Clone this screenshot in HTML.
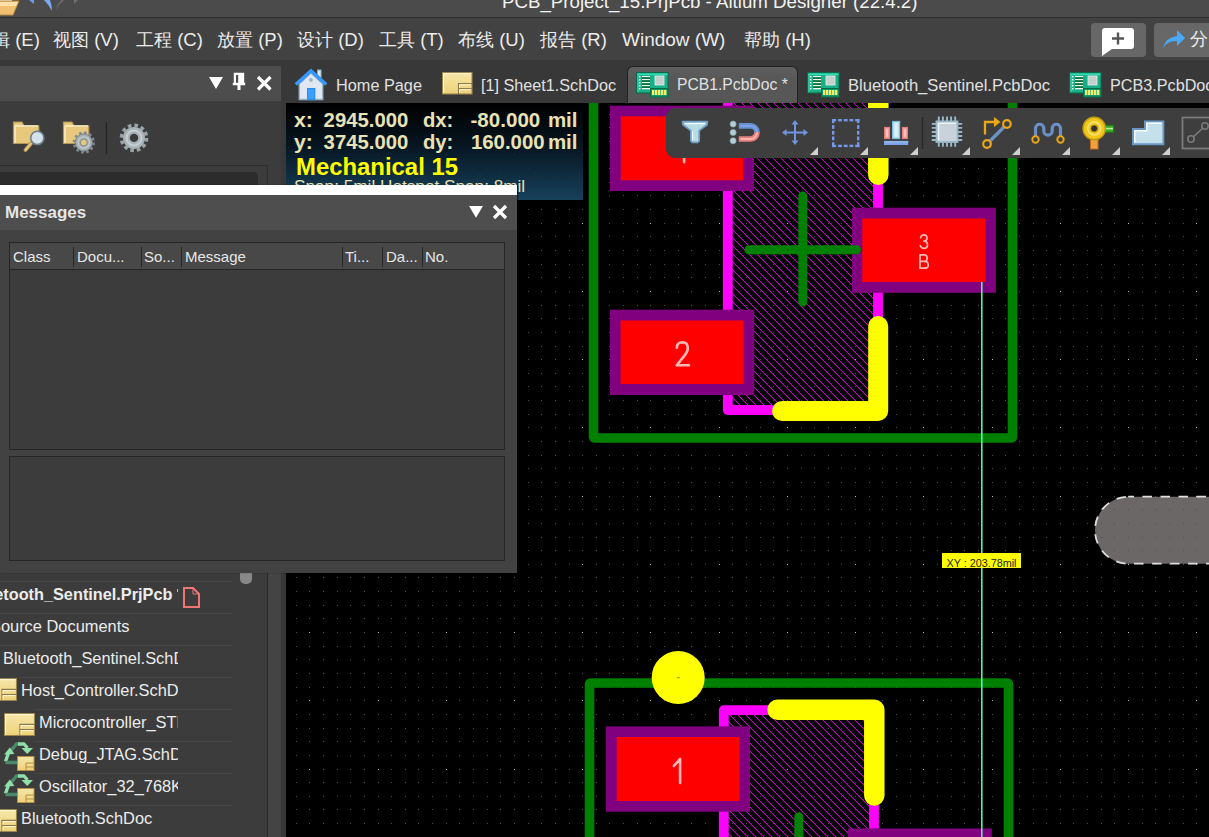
<!DOCTYPE html>
<html><head><meta charset="utf-8">
<style>
*{margin:0;padding:0;box-sizing:border-box}
html,body{width:1209px;height:837px;overflow:hidden;background:#383838;font-family:"Liberation Sans",sans-serif;color:#e8e8e8}
.a{position:absolute}
#title{left:0;top:0;width:1209px;height:18px;background:#4b4b4b;border-bottom:1px solid #2e2e2e;overflow:hidden}
#menu{left:0;top:18px;width:1209px;height:42px;background:#424242}
.mi{position:absolute;top:11px;font-size:18.5px;line-height:22px;color:#ececec;white-space:nowrap;letter-spacing:0px}
.cj{font-size:18px}
#tabbar{left:0;top:60px;width:1209px;height:43px;background:#383838}
#lph{left:0;top:66px;width:281px;height:35px;background:#4d4d4d}
#lpb{left:0;top:101px;width:281px;height:736px;background:#3c3c3c}
#lps{left:267px;top:190px;width:14px;height:647px;background:#444;border-left:1px solid #2a2a2a}
#canvas{left:286px;top:103px;width:923px;height:734px;background:#000;overflow:hidden}
.tab{position:absolute;top:67px;height:36px;font-size:17px;color:#e0e0e0;white-space:nowrap}
.row{position:absolute;left:0;width:232px;height:1px;background:#474747}
.tr{position:absolute;font-size:16.4px;color:#ececec;white-space:nowrap}
#msg{left:0;top:185px;width:517px;height:388px;background:#424242;box-shadow:1px 0 1px rgba(0,0,0,0.5)}
</style></head><body>
<div id="title" class="a">
  <div class="a" style="left:502px;top:-9px;font-size:18.7px;color:#f2f2f2;white-space:nowrap">PCB_Project_15.PrjPcb - Altium Designer (22.4.2)</div>
  <svg class="a" style="left:0;top:0" width="90" height="17" viewBox="0 0 90 17">
    <rect x="0" y="-2" width="12" height="4" fill="#fff"/>
    <path d="M-2 1 H19 L13 15 H-2 Z" fill="#f0c070" stroke="#b88a40" stroke-width="1"/>
    <path d="M-2 2 H18 L16 6 H-2 Z" fill="#fbe0a8"/>
    <path d="M29 0 H34 V4 Z" fill="#6a9ae8"/>
    <path d="M44 0 H50 Q52 6 52 11 Q49 5 44 0 Z" fill="#7aa8f0"/>
    <path d="M56 10 Q57 4 62 0 H64 Q59 4 56 10 Z" fill="#6e6e6e"/>
    <path d="M74 4 L78 0 H74 Z" fill="#6e6e6e"/>
  </svg>
</div>
<div id="menu" class="a">
  <div class="mi" style="left:-8px"><span class="cj">辑</span> (E)</div>
  <div class="mi" style="left:53px"><span class="cj">视图</span> (V)</div>
  <div class="mi" style="left:136px"><span class="cj">工程</span> (C)</div>
  <div class="mi" style="left:217px"><span class="cj">放置</span> (P)</div>
  <div class="mi" style="left:297px"><span class="cj">设计</span> (D)</div>
  <div class="mi" style="left:379px"><span class="cj">工具</span> (T)</div>
  <div class="mi" style="left:458px"><span class="cj">布线</span> (U)</div>
  <div class="mi" style="left:540px"><span class="cj">报告</span> (R)</div>
  <div class="mi" style="left:744px"><span class="cj">帮助</span> (H)</div>
  <div class="mi" style="left:622px;font-size:19px">Window (W)</div>
  <div class="a" style="left:1091px;top:5px;width:55px;height:34px;background:#676767;border-radius:4px"></div>
  <svg class="a" style="left:1101px;top:9px" width="34" height="30" viewBox="0 0 34 30"><path d="M4 1 H30 Q33 1 33 4 V19 Q33 22 30 22 H11 L1 29 V4 Q1 1 4 1 Z" fill="#fff"/><path d="M17 5.5 V17.5 M11 11.5 H23" stroke="#555" stroke-width="2.4"/></svg>
  <div class="a" style="left:1154px;top:5px;width:60px;height:34px;background:#676767;border-radius:4px"></div>
  <svg class="a" style="left:1162px;top:9px" width="24" height="22" viewBox="0 0 24 22"><path d="M1 21 Q4 10 15 9 V3 L23 11 L15 19 V14 Q6 13 1 21 Z" fill="#4aa8f8"/></svg>
  <div class="mi" style="left:1190px;top:10px"><span class="cj">分</span></div>
</div>
<div id="tabbar" class="a"></div>
<svg class="a" style="left:294px;top:67px" width="34" height="34" viewBox="0 0 34 34">
 <rect x="23.5" y="3" width="3.5" height="8" fill="#dde8f2" stroke="#90b0c0" stroke-width="1"/>
 <path d="M5.2 17 L17 6 L28.8 17 V32.5 H5.2 Z" fill="#dfe7f2" stroke="#92b2c2" stroke-width="1.3"/>
 <path d="M1.8 17.6 L17 3.7 L32.2 17.6" fill="none" stroke="#3399ff" stroke-width="3.4" stroke-linejoin="miter" stroke-linecap="butt"/>
 <circle cx="17" cy="13" r="1.9" fill="#98b4c4"/>
 <rect x="13.6" y="21.6" width="7.2" height="11.2" fill="#38a0ff" stroke="#2280f0" stroke-width="1"/>
</svg>
<div class="tab" style="left:336px;top:76px;font-size:16.3px">Home Page</div>
<svg class="a" style="left:442px;top:72px" width="31" height="23" viewBox="0 0 31 23"><rect x="0.5" y="0.5" width="29.5" height="21.5" fill="url(#ysh)" stroke="#9c8650" stroke-width="1.1"/><path d="M1.6 21 V1.6 H29" fill="none" stroke="#fff6d0" stroke-width="1.1"/><path d="M16.5 22 V11.6 H30" fill="none" stroke="#8c7a4c" stroke-width="1.1"/><path d="M16.5 16.6 H30" stroke="#8c7a4c" stroke-width="1.1"/><path d="M17.6 15.8 V12.7 H29 M17.6 21 V17.7 H29" fill="none" stroke="#fff6d0" stroke-width="1"/></svg>
<div class="tab" style="left:481px;top:76px;font-size:16.2px">[1] Sheet1.SchDoc</div>
<div class="a" style="left:627px;top:66px;width:171px;height:38px;background:linear-gradient(#5e5e5e,#575757 40%);border:1px solid #222;border-bottom:none;border-radius:6px 6px 0 0"></div>
<svg class="a" style="left:636px;top:72px" width="33" height="26" viewBox="0 0 33 26"><rect x="0.5" y="0.5" width="31.5" height="20.5" fill="#17b088" stroke="#0a6a48"/><rect x="1.5" y="1.5" width="30" height="1.6" fill="#3ad8b4"/><rect x="1.5" y="2" width="1.2" height="18" fill="#40d0a8"/><g fill="#f4faf6"><rect x="3" y="4" width="1.5" height="1.5"/><rect x="6" y="4" width="8" height="1.3"/><rect x="3" y="7" width="1.5" height="1.5"/><rect x="6" y="7" width="8" height="1.3"/><rect x="3" y="10" width="1.5" height="1.5"/><rect x="6" y="10" width="8" height="1.3"/><rect x="3" y="13" width="1.5" height="1.5"/><rect x="6" y="13" width="8" height="1.3"/><rect x="3" y="16" width="1.5" height="1.5"/><rect x="6" y="16" width="8" height="1.3"/></g><g fill="#0c6a30"><rect x="6" y="5.3" width="8" height="1.6"/><rect x="6" y="8.3" width="8" height="1.6"/><rect x="6" y="11.3" width="8" height="1.6"/><rect x="6" y="14.3" width="8" height="1.6"/></g><rect x="19" y="4" width="9" height="9" fill="#c4d0cc" stroke="#e6eeec" stroke-width="0.8"/><rect x="14.5" y="16.5" width="17.5" height="8.5" fill="#129a6c" stroke="#0a6a48"/><g fill="#eef070"><rect x="16" y="18" width="2.4" height="5"/><rect x="19" y="18" width="2.4" height="5"/><rect x="22" y="18" width="2.4" height="5"/><rect x="25" y="18" width="2.4" height="5"/><rect x="28" y="18" width="2.4" height="5"/></g></svg>
<div class="tab" style="left:677px;top:76px;font-size:15.7px">PCB1.PcbDoc *</div>
<svg class="a" style="left:807px;top:72px" width="33" height="26" viewBox="0 0 33 26"><rect x="0.5" y="0.5" width="31.5" height="20.5" fill="#17b088" stroke="#0a6a48"/><rect x="1.5" y="1.5" width="30" height="1.6" fill="#3ad8b4"/><rect x="1.5" y="2" width="1.2" height="18" fill="#40d0a8"/><g fill="#f4faf6"><rect x="3" y="4" width="1.5" height="1.5"/><rect x="6" y="4" width="8" height="1.3"/><rect x="3" y="7" width="1.5" height="1.5"/><rect x="6" y="7" width="8" height="1.3"/><rect x="3" y="10" width="1.5" height="1.5"/><rect x="6" y="10" width="8" height="1.3"/><rect x="3" y="13" width="1.5" height="1.5"/><rect x="6" y="13" width="8" height="1.3"/><rect x="3" y="16" width="1.5" height="1.5"/><rect x="6" y="16" width="8" height="1.3"/></g><g fill="#0c6a30"><rect x="6" y="5.3" width="8" height="1.6"/><rect x="6" y="8.3" width="8" height="1.6"/><rect x="6" y="11.3" width="8" height="1.6"/><rect x="6" y="14.3" width="8" height="1.6"/></g><rect x="19" y="4" width="9" height="9" fill="#c4d0cc" stroke="#e6eeec" stroke-width="0.8"/><rect x="14.5" y="16.5" width="17.5" height="8.5" fill="#129a6c" stroke="#0a6a48"/><g fill="#eef070"><rect x="16" y="18" width="2.4" height="5"/><rect x="19" y="18" width="2.4" height="5"/><rect x="22" y="18" width="2.4" height="5"/><rect x="25" y="18" width="2.4" height="5"/><rect x="28" y="18" width="2.4" height="5"/></g></svg>
<div class="tab" style="left:848px;top:76px;font-size:16.6px">Bluetooth_Sentinel.PcbDoc</div>
<svg class="a" style="left:1069px;top:72px" width="33" height="26" viewBox="0 0 33 26"><rect x="0.5" y="0.5" width="31.5" height="20.5" fill="#17b088" stroke="#0a6a48"/><rect x="1.5" y="1.5" width="30" height="1.6" fill="#3ad8b4"/><rect x="1.5" y="2" width="1.2" height="18" fill="#40d0a8"/><g fill="#f4faf6"><rect x="3" y="4" width="1.5" height="1.5"/><rect x="6" y="4" width="8" height="1.3"/><rect x="3" y="7" width="1.5" height="1.5"/><rect x="6" y="7" width="8" height="1.3"/><rect x="3" y="10" width="1.5" height="1.5"/><rect x="6" y="10" width="8" height="1.3"/><rect x="3" y="13" width="1.5" height="1.5"/><rect x="6" y="13" width="8" height="1.3"/><rect x="3" y="16" width="1.5" height="1.5"/><rect x="6" y="16" width="8" height="1.3"/></g><g fill="#0c6a30"><rect x="6" y="5.3" width="8" height="1.6"/><rect x="6" y="8.3" width="8" height="1.6"/><rect x="6" y="11.3" width="8" height="1.6"/><rect x="6" y="14.3" width="8" height="1.6"/></g><rect x="19" y="4" width="9" height="9" fill="#c4d0cc" stroke="#e6eeec" stroke-width="0.8"/><rect x="14.5" y="16.5" width="17.5" height="8.5" fill="#129a6c" stroke="#0a6a48"/><g fill="#eef070"><rect x="16" y="18" width="2.4" height="5"/><rect x="19" y="18" width="2.4" height="5"/><rect x="22" y="18" width="2.4" height="5"/><rect x="25" y="18" width="2.4" height="5"/><rect x="28" y="18" width="2.4" height="5"/></g></svg>
<div class="tab" style="left:1110px;top:76px;font-size:16.2px">PCB3.PcbDoc</div>

<div id="lph" class="a"></div>
<div id="lpb" class="a"></div>
<div id="lps" class="a"></div>
<svg class="a" style="left:0;top:0;width:0;height:0"><defs>
<path id="dots" d="M296 114h1v1h-1zm13 0h1v1h-1zm14 0h1v1h-1zm14 0h1v1h-1zm13 0h1v1h-1zm14 0h1v1h-1zm14 0h1v1h-1zm13 0h1v1h-1zm14 0h1v1h-1zm13 0h1v1h-1zm14 0h1v1h-1zm14 0h1v1h-1zm13 0h1v1h-1zm14 0h1v1h-1zm14 0h1v1h-1zm13 0h1v1h-1zm14 0h1v1h-1zm14 0h1v1h-1zm13 0h1v1h-1zm14 0h1v1h-1zm14 0h1v1h-1zm13 0h1v1h-1zm14 0h1v1h-1zm13 0h1v1h-1zm14 0h1v1h-1zm14 0h1v1h-1zm13 0h1v1h-1zm14 0h1v1h-1zm14 0h1v1h-1zm13 0h1v1h-1zm14 0h1v1h-1zm14 0h1v1h-1zm13 0h1v1h-1zm14 0h1v1h-1zm14 0h1v1h-1zm13 0h1v1h-1zm14 0h1v1h-1zm14 0h1v1h-1zm13 0h1v1h-1zm14 0h1v1h-1zm13 0h1v1h-1zm14 0h1v1h-1zm14 0h1v1h-1zm13 0h1v1h-1zm14 0h1v1h-1zm14 0h1v1h-1zm13 0h1v1h-1zm14 0h1v1h-1zm14 0h1v1h-1zm13 0h1v1h-1zm14 0h1v1h-1zm14 0h1v1h-1zm13 0h1v1h-1zm14 0h1v1h-1zm14 0h1v1h-1zm13 0h1v1h-1zm14 0h1v1h-1zm13 0h1v1h-1zm14 0h1v1h-1zm14 0h1v1h-1zm13 0h1v1h-1zm14 0h1v1h-1zm14 0h1v1h-1zm13 0h1v1h-1zm14 0h1v1h-1zm14 0h1v1h-1zm13 0h1v1h-1zm-900 13h1v1h-1zm13 0h1v1h-1zm14 0h1v1h-1zm14 0h1v1h-1zm13 0h1v1h-1zm14 0h1v1h-1zm14 0h1v1h-1zm13 0h1v1h-1zm14 0h1v1h-1zm13 0h1v1h-1zm14 0h1v1h-1zm14 0h1v1h-1zm13 0h1v1h-1zm14 0h1v1h-1zm14 0h1v1h-1zm13 0h1v1h-1zm14 0h1v1h-1zm14 0h1v1h-1zm13 0h1v1h-1zm14 0h1v1h-1zm14 0h1v1h-1zm13 0h1v1h-1zm14 0h1v1h-1zm13 0h1v1h-1zm14 0h1v1h-1zm14 0h1v1h-1zm13 0h1v1h-1zm14 0h1v1h-1zm14 0h1v1h-1zm13 0h1v1h-1zm14 0h1v1h-1zm14 0h1v1h-1zm13 0h1v1h-1zm14 0h1v1h-1zm14 0h1v1h-1zm13 0h1v1h-1zm14 0h1v1h-1zm14 0h1v1h-1zm13 0h1v1h-1zm14 0h1v1h-1zm13 0h1v1h-1zm14 0h1v1h-1zm14 0h1v1h-1zm13 0h1v1h-1zm14 0h1v1h-1zm14 0h1v1h-1zm13 0h1v1h-1zm14 0h1v1h-1zm14 0h1v1h-1zm13 0h1v1h-1zm14 0h1v1h-1zm14 0h1v1h-1zm13 0h1v1h-1zm14 0h1v1h-1zm14 0h1v1h-1zm13 0h1v1h-1zm14 0h1v1h-1zm13 0h1v1h-1zm14 0h1v1h-1zm14 0h1v1h-1zm13 0h1v1h-1zm14 0h1v1h-1zm14 0h1v1h-1zm13 0h1v1h-1zm14 0h1v1h-1zm14 0h1v1h-1zm13 0h1v1h-1zm-900 14h1v1h-1zm13 0h1v1h-1zm14 0h1v1h-1zm14 0h1v1h-1zm13 0h1v1h-1zm14 0h1v1h-1zm14 0h1v1h-1zm13 0h1v1h-1zm14 0h1v1h-1zm13 0h1v1h-1zm14 0h1v1h-1zm14 0h1v1h-1zm13 0h1v1h-1zm14 0h1v1h-1zm14 0h1v1h-1zm13 0h1v1h-1zm14 0h1v1h-1zm14 0h1v1h-1zm13 0h1v1h-1zm14 0h1v1h-1zm14 0h1v1h-1zm13 0h1v1h-1zm14 0h1v1h-1zm13 0h1v1h-1zm14 0h1v1h-1zm14 0h1v1h-1zm13 0h1v1h-1zm14 0h1v1h-1zm14 0h1v1h-1zm13 0h1v1h-1zm14 0h1v1h-1zm14 0h1v1h-1zm13 0h1v1h-1zm14 0h1v1h-1zm14 0h1v1h-1zm13 0h1v1h-1zm14 0h1v1h-1zm14 0h1v1h-1zm13 0h1v1h-1zm14 0h1v1h-1zm13 0h1v1h-1zm14 0h1v1h-1zm14 0h1v1h-1zm13 0h1v1h-1zm14 0h1v1h-1zm14 0h1v1h-1zm13 0h1v1h-1zm14 0h1v1h-1zm14 0h1v1h-1zm13 0h1v1h-1zm14 0h1v1h-1zm14 0h1v1h-1zm13 0h1v1h-1zm14 0h1v1h-1zm14 0h1v1h-1zm13 0h1v1h-1zm14 0h1v1h-1zm13 0h1v1h-1zm14 0h1v1h-1zm14 0h1v1h-1zm13 0h1v1h-1zm14 0h1v1h-1zm14 0h1v1h-1zm13 0h1v1h-1zm14 0h1v1h-1zm14 0h1v1h-1zm13 0h1v1h-1zm-900 13h1v1h-1zm27 0h1v1h-1zm14 0h1v1h-1zm13 0h1v1h-1zm14 0h1v1h-1zm27 0h1v1h-1zm14 0h1v1h-1zm13 0h1v1h-1zm14 0h1v1h-1zm27 0h1v1h-1zm14 0h1v1h-1zm14 0h1v1h-1zm13 0h1v1h-1zm28 0h1v1h-1zm13 0h1v1h-1zm14 0h1v1h-1zm14 0h1v1h-1zm27 0h1v1h-1zm13 0h1v1h-1zm14 0h1v1h-1zm14 0h1v1h-1zm27 0h1v1h-1zm14 0h1v1h-1zm13 0h1v1h-1zm14 0h1v1h-1zm27 0h1v1h-1zm14 0h1v1h-1zm14 0h1v1h-1zm13 0h1v1h-1zm28 0h1v1h-1zm13 0h1v1h-1zm14 0h1v1h-1zm13 0h1v1h-1zm28 0h1v1h-1zm13 0h1v1h-1zm14 0h1v1h-1zm14 0h1v1h-1zm27 0h1v1h-1zm14 0h1v1h-1zm13 0h1v1h-1zm14 0h1v1h-1zm27 0h1v1h-1zm14 0h1v1h-1zm14 0h1v1h-1zm13 0h1v1h-1zm27 0h1v1h-1zm14 0h1v1h-1zm14 0h1v1h-1zm13 0h1v1h-1zm28 0h1v1h-1zm13 0h1v1h-1zm14 0h1v1h-1zm14 0h1v1h-1zm-887 14h1v1h-1zm13 0h1v1h-1zm14 0h1v1h-1zm14 0h1v1h-1zm13 0h1v1h-1zm14 0h1v1h-1zm14 0h1v1h-1zm13 0h1v1h-1zm14 0h1v1h-1zm13 0h1v1h-1zm14 0h1v1h-1zm14 0h1v1h-1zm13 0h1v1h-1zm14 0h1v1h-1zm14 0h1v1h-1zm13 0h1v1h-1zm14 0h1v1h-1zm14 0h1v1h-1zm13 0h1v1h-1zm14 0h1v1h-1zm14 0h1v1h-1zm13 0h1v1h-1zm14 0h1v1h-1zm13 0h1v1h-1zm14 0h1v1h-1zm14 0h1v1h-1zm13 0h1v1h-1zm14 0h1v1h-1zm14 0h1v1h-1zm13 0h1v1h-1zm14 0h1v1h-1zm14 0h1v1h-1zm13 0h1v1h-1zm14 0h1v1h-1zm14 0h1v1h-1zm13 0h1v1h-1zm14 0h1v1h-1zm14 0h1v1h-1zm13 0h1v1h-1zm14 0h1v1h-1zm13 0h1v1h-1zm14 0h1v1h-1zm14 0h1v1h-1zm13 0h1v1h-1zm14 0h1v1h-1zm14 0h1v1h-1zm13 0h1v1h-1zm14 0h1v1h-1zm14 0h1v1h-1zm13 0h1v1h-1zm14 0h1v1h-1zm14 0h1v1h-1zm13 0h1v1h-1zm14 0h1v1h-1zm14 0h1v1h-1zm13 0h1v1h-1zm14 0h1v1h-1zm13 0h1v1h-1zm14 0h1v1h-1zm14 0h1v1h-1zm13 0h1v1h-1zm14 0h1v1h-1zm14 0h1v1h-1zm13 0h1v1h-1zm14 0h1v1h-1zm14 0h1v1h-1zm13 0h1v1h-1zm-900 14h1v1h-1zm13 0h1v1h-1zm14 0h1v1h-1zm14 0h1v1h-1zm13 0h1v1h-1zm14 0h1v1h-1zm14 0h1v1h-1zm13 0h1v1h-1zm14 0h1v1h-1zm13 0h1v1h-1zm14 0h1v1h-1zm14 0h1v1h-1zm13 0h1v1h-1zm14 0h1v1h-1zm14 0h1v1h-1zm13 0h1v1h-1zm14 0h1v1h-1zm14 0h1v1h-1zm13 0h1v1h-1zm14 0h1v1h-1zm14 0h1v1h-1zm13 0h1v1h-1zm14 0h1v1h-1zm13 0h1v1h-1zm14 0h1v1h-1zm14 0h1v1h-1zm13 0h1v1h-1zm14 0h1v1h-1zm14 0h1v1h-1zm13 0h1v1h-1zm14 0h1v1h-1zm14 0h1v1h-1zm13 0h1v1h-1zm14 0h1v1h-1zm14 0h1v1h-1zm13 0h1v1h-1zm14 0h1v1h-1zm14 0h1v1h-1zm13 0h1v1h-1zm14 0h1v1h-1zm13 0h1v1h-1zm14 0h1v1h-1zm14 0h1v1h-1zm13 0h1v1h-1zm14 0h1v1h-1zm14 0h1v1h-1zm13 0h1v1h-1zm14 0h1v1h-1zm14 0h1v1h-1zm13 0h1v1h-1zm14 0h1v1h-1zm14 0h1v1h-1zm13 0h1v1h-1zm14 0h1v1h-1zm14 0h1v1h-1zm13 0h1v1h-1zm14 0h1v1h-1zm13 0h1v1h-1zm14 0h1v1h-1zm14 0h1v1h-1zm13 0h1v1h-1zm14 0h1v1h-1zm14 0h1v1h-1zm13 0h1v1h-1zm14 0h1v1h-1zm14 0h1v1h-1zm13 0h1v1h-1zm-900 13h1v1h-1zm13 0h1v1h-1zm14 0h1v1h-1zm14 0h1v1h-1zm13 0h1v1h-1zm14 0h1v1h-1zm14 0h1v1h-1zm13 0h1v1h-1zm14 0h1v1h-1zm13 0h1v1h-1zm14 0h1v1h-1zm14 0h1v1h-1zm13 0h1v1h-1zm14 0h1v1h-1zm14 0h1v1h-1zm13 0h1v1h-1zm14 0h1v1h-1zm14 0h1v1h-1zm13 0h1v1h-1zm14 0h1v1h-1zm14 0h1v1h-1zm13 0h1v1h-1zm14 0h1v1h-1zm13 0h1v1h-1zm14 0h1v1h-1zm14 0h1v1h-1zm13 0h1v1h-1zm14 0h1v1h-1zm14 0h1v1h-1zm13 0h1v1h-1zm14 0h1v1h-1zm14 0h1v1h-1zm13 0h1v1h-1zm14 0h1v1h-1zm14 0h1v1h-1zm13 0h1v1h-1zm14 0h1v1h-1zm14 0h1v1h-1zm13 0h1v1h-1zm14 0h1v1h-1zm13 0h1v1h-1zm14 0h1v1h-1zm14 0h1v1h-1zm13 0h1v1h-1zm14 0h1v1h-1zm14 0h1v1h-1zm13 0h1v1h-1zm14 0h1v1h-1zm14 0h1v1h-1zm13 0h1v1h-1zm14 0h1v1h-1zm14 0h1v1h-1zm13 0h1v1h-1zm14 0h1v1h-1zm14 0h1v1h-1zm13 0h1v1h-1zm14 0h1v1h-1zm13 0h1v1h-1zm14 0h1v1h-1zm14 0h1v1h-1zm13 0h1v1h-1zm14 0h1v1h-1zm14 0h1v1h-1zm13 0h1v1h-1zm14 0h1v1h-1zm14 0h1v1h-1zm13 0h1v1h-1zm-900 14h1v1h-1zm13 0h1v1h-1zm14 0h1v1h-1zm14 0h1v1h-1zm13 0h1v1h-1zm14 0h1v1h-1zm14 0h1v1h-1zm13 0h1v1h-1zm14 0h1v1h-1zm13 0h1v1h-1zm14 0h1v1h-1zm14 0h1v1h-1zm13 0h1v1h-1zm14 0h1v1h-1zm14 0h1v1h-1zm13 0h1v1h-1zm14 0h1v1h-1zm14 0h1v1h-1zm13 0h1v1h-1zm14 0h1v1h-1zm14 0h1v1h-1zm13 0h1v1h-1zm14 0h1v1h-1zm13 0h1v1h-1zm14 0h1v1h-1zm14 0h1v1h-1zm13 0h1v1h-1zm14 0h1v1h-1zm14 0h1v1h-1zm13 0h1v1h-1zm14 0h1v1h-1zm14 0h1v1h-1zm13 0h1v1h-1zm14 0h1v1h-1zm14 0h1v1h-1zm13 0h1v1h-1zm14 0h1v1h-1zm14 0h1v1h-1zm13 0h1v1h-1zm14 0h1v1h-1zm13 0h1v1h-1zm14 0h1v1h-1zm14 0h1v1h-1zm13 0h1v1h-1zm14 0h1v1h-1zm14 0h1v1h-1zm13 0h1v1h-1zm14 0h1v1h-1zm14 0h1v1h-1zm13 0h1v1h-1zm14 0h1v1h-1zm14 0h1v1h-1zm13 0h1v1h-1zm14 0h1v1h-1zm14 0h1v1h-1zm13 0h1v1h-1zm14 0h1v1h-1zm13 0h1v1h-1zm14 0h1v1h-1zm14 0h1v1h-1zm13 0h1v1h-1zm14 0h1v1h-1zm14 0h1v1h-1zm13 0h1v1h-1zm14 0h1v1h-1zm14 0h1v1h-1zm13 0h1v1h-1zm-900 14h1v1h-1zm27 0h1v1h-1zm14 0h1v1h-1zm13 0h1v1h-1zm14 0h1v1h-1zm27 0h1v1h-1zm14 0h1v1h-1zm13 0h1v1h-1zm14 0h1v1h-1zm27 0h1v1h-1zm14 0h1v1h-1zm14 0h1v1h-1zm13 0h1v1h-1zm28 0h1v1h-1zm13 0h1v1h-1zm14 0h1v1h-1zm14 0h1v1h-1zm27 0h1v1h-1zm13 0h1v1h-1zm14 0h1v1h-1zm14 0h1v1h-1zm27 0h1v1h-1zm14 0h1v1h-1zm13 0h1v1h-1zm14 0h1v1h-1zm27 0h1v1h-1zm14 0h1v1h-1zm14 0h1v1h-1zm13 0h1v1h-1zm28 0h1v1h-1zm13 0h1v1h-1zm14 0h1v1h-1zm13 0h1v1h-1zm28 0h1v1h-1zm13 0h1v1h-1zm14 0h1v1h-1zm14 0h1v1h-1zm27 0h1v1h-1zm14 0h1v1h-1zm13 0h1v1h-1zm14 0h1v1h-1zm27 0h1v1h-1zm14 0h1v1h-1zm14 0h1v1h-1zm13 0h1v1h-1zm27 0h1v1h-1zm14 0h1v1h-1zm14 0h1v1h-1zm13 0h1v1h-1zm28 0h1v1h-1zm13 0h1v1h-1zm14 0h1v1h-1zm14 0h1v1h-1zm-887 13h1v1h-1zm13 0h1v1h-1zm14 0h1v1h-1zm14 0h1v1h-1zm13 0h1v1h-1zm14 0h1v1h-1zm14 0h1v1h-1zm13 0h1v1h-1zm14 0h1v1h-1zm13 0h1v1h-1zm14 0h1v1h-1zm14 0h1v1h-1zm13 0h1v1h-1zm14 0h1v1h-1zm14 0h1v1h-1zm13 0h1v1h-1zm14 0h1v1h-1zm14 0h1v1h-1zm13 0h1v1h-1zm14 0h1v1h-1zm14 0h1v1h-1zm13 0h1v1h-1zm14 0h1v1h-1zm13 0h1v1h-1zm14 0h1v1h-1zm14 0h1v1h-1zm13 0h1v1h-1zm14 0h1v1h-1zm14 0h1v1h-1zm13 0h1v1h-1zm14 0h1v1h-1zm14 0h1v1h-1zm13 0h1v1h-1zm14 0h1v1h-1zm14 0h1v1h-1zm13 0h1v1h-1zm14 0h1v1h-1zm14 0h1v1h-1zm13 0h1v1h-1zm14 0h1v1h-1zm13 0h1v1h-1zm14 0h1v1h-1zm14 0h1v1h-1zm13 0h1v1h-1zm14 0h1v1h-1zm14 0h1v1h-1zm13 0h1v1h-1zm14 0h1v1h-1zm14 0h1v1h-1zm13 0h1v1h-1zm14 0h1v1h-1zm14 0h1v1h-1zm13 0h1v1h-1zm14 0h1v1h-1zm14 0h1v1h-1zm13 0h1v1h-1zm14 0h1v1h-1zm13 0h1v1h-1zm14 0h1v1h-1zm14 0h1v1h-1zm13 0h1v1h-1zm14 0h1v1h-1zm14 0h1v1h-1zm13 0h1v1h-1zm14 0h1v1h-1zm14 0h1v1h-1zm13 0h1v1h-1zm-900 14h1v1h-1zm13 0h1v1h-1zm14 0h1v1h-1zm14 0h1v1h-1zm13 0h1v1h-1zm14 0h1v1h-1zm14 0h1v1h-1zm13 0h1v1h-1zm14 0h1v1h-1zm13 0h1v1h-1zm14 0h1v1h-1zm14 0h1v1h-1zm13 0h1v1h-1zm14 0h1v1h-1zm14 0h1v1h-1zm13 0h1v1h-1zm14 0h1v1h-1zm14 0h1v1h-1zm13 0h1v1h-1zm14 0h1v1h-1zm14 0h1v1h-1zm13 0h1v1h-1zm14 0h1v1h-1zm13 0h1v1h-1zm14 0h1v1h-1zm14 0h1v1h-1zm13 0h1v1h-1zm14 0h1v1h-1zm14 0h1v1h-1zm13 0h1v1h-1zm14 0h1v1h-1zm14 0h1v1h-1zm13 0h1v1h-1zm14 0h1v1h-1zm14 0h1v1h-1zm13 0h1v1h-1zm14 0h1v1h-1zm14 0h1v1h-1zm13 0h1v1h-1zm14 0h1v1h-1zm13 0h1v1h-1zm14 0h1v1h-1zm14 0h1v1h-1zm13 0h1v1h-1zm14 0h1v1h-1zm14 0h1v1h-1zm13 0h1v1h-1zm14 0h1v1h-1zm14 0h1v1h-1zm13 0h1v1h-1zm14 0h1v1h-1zm14 0h1v1h-1zm13 0h1v1h-1zm14 0h1v1h-1zm14 0h1v1h-1zm13 0h1v1h-1zm14 0h1v1h-1zm13 0h1v1h-1zm14 0h1v1h-1zm14 0h1v1h-1zm13 0h1v1h-1zm14 0h1v1h-1zm14 0h1v1h-1zm13 0h1v1h-1zm14 0h1v1h-1zm14 0h1v1h-1zm13 0h1v1h-1zm-900 14h1v1h-1zm13 0h1v1h-1zm14 0h1v1h-1zm14 0h1v1h-1zm13 0h1v1h-1zm14 0h1v1h-1zm14 0h1v1h-1zm13 0h1v1h-1zm14 0h1v1h-1zm13 0h1v1h-1zm14 0h1v1h-1zm14 0h1v1h-1zm13 0h1v1h-1zm14 0h1v1h-1zm14 0h1v1h-1zm13 0h1v1h-1zm14 0h1v1h-1zm14 0h1v1h-1zm13 0h1v1h-1zm14 0h1v1h-1zm14 0h1v1h-1zm13 0h1v1h-1zm14 0h1v1h-1zm13 0h1v1h-1zm14 0h1v1h-1zm14 0h1v1h-1zm13 0h1v1h-1zm14 0h1v1h-1zm14 0h1v1h-1zm13 0h1v1h-1zm14 0h1v1h-1zm14 0h1v1h-1zm13 0h1v1h-1zm14 0h1v1h-1zm14 0h1v1h-1zm13 0h1v1h-1zm14 0h1v1h-1zm14 0h1v1h-1zm13 0h1v1h-1zm14 0h1v1h-1zm13 0h1v1h-1zm14 0h1v1h-1zm14 0h1v1h-1zm13 0h1v1h-1zm14 0h1v1h-1zm14 0h1v1h-1zm13 0h1v1h-1zm14 0h1v1h-1zm14 0h1v1h-1zm13 0h1v1h-1zm14 0h1v1h-1zm14 0h1v1h-1zm13 0h1v1h-1zm14 0h1v1h-1zm14 0h1v1h-1zm13 0h1v1h-1zm14 0h1v1h-1zm13 0h1v1h-1zm14 0h1v1h-1zm14 0h1v1h-1zm13 0h1v1h-1zm14 0h1v1h-1zm14 0h1v1h-1zm13 0h1v1h-1zm14 0h1v1h-1zm14 0h1v1h-1zm13 0h1v1h-1zm-900 13h1v1h-1zm13 0h1v1h-1zm14 0h1v1h-1zm14 0h1v1h-1zm13 0h1v1h-1zm14 0h1v1h-1zm14 0h1v1h-1zm13 0h1v1h-1zm14 0h1v1h-1zm13 0h1v1h-1zm14 0h1v1h-1zm14 0h1v1h-1zm13 0h1v1h-1zm14 0h1v1h-1zm14 0h1v1h-1zm13 0h1v1h-1zm14 0h1v1h-1zm14 0h1v1h-1zm13 0h1v1h-1zm14 0h1v1h-1zm14 0h1v1h-1zm13 0h1v1h-1zm14 0h1v1h-1zm13 0h1v1h-1zm14 0h1v1h-1zm14 0h1v1h-1zm13 0h1v1h-1zm14 0h1v1h-1zm14 0h1v1h-1zm13 0h1v1h-1zm14 0h1v1h-1zm14 0h1v1h-1zm13 0h1v1h-1zm14 0h1v1h-1zm14 0h1v1h-1zm13 0h1v1h-1zm14 0h1v1h-1zm14 0h1v1h-1zm13 0h1v1h-1zm14 0h1v1h-1zm13 0h1v1h-1zm14 0h1v1h-1zm14 0h1v1h-1zm13 0h1v1h-1zm14 0h1v1h-1zm14 0h1v1h-1zm13 0h1v1h-1zm14 0h1v1h-1zm14 0h1v1h-1zm13 0h1v1h-1zm14 0h1v1h-1zm14 0h1v1h-1zm13 0h1v1h-1zm14 0h1v1h-1zm14 0h1v1h-1zm13 0h1v1h-1zm14 0h1v1h-1zm13 0h1v1h-1zm14 0h1v1h-1zm14 0h1v1h-1zm13 0h1v1h-1zm14 0h1v1h-1zm14 0h1v1h-1zm13 0h1v1h-1zm14 0h1v1h-1zm14 0h1v1h-1zm13 0h1v1h-1zm-900 14h1v1h-1zm27 0h1v1h-1zm14 0h1v1h-1zm13 0h1v1h-1zm14 0h1v1h-1zm27 0h1v1h-1zm14 0h1v1h-1zm13 0h1v1h-1zm14 0h1v1h-1zm27 0h1v1h-1zm14 0h1v1h-1zm14 0h1v1h-1zm13 0h1v1h-1zm28 0h1v1h-1zm13 0h1v1h-1zm14 0h1v1h-1zm14 0h1v1h-1zm27 0h1v1h-1zm13 0h1v1h-1zm14 0h1v1h-1zm14 0h1v1h-1zm27 0h1v1h-1zm14 0h1v1h-1zm13 0h1v1h-1zm14 0h1v1h-1zm27 0h1v1h-1zm14 0h1v1h-1zm14 0h1v1h-1zm13 0h1v1h-1zm28 0h1v1h-1zm13 0h1v1h-1zm14 0h1v1h-1zm13 0h1v1h-1zm28 0h1v1h-1zm13 0h1v1h-1zm14 0h1v1h-1zm14 0h1v1h-1zm27 0h1v1h-1zm14 0h1v1h-1zm13 0h1v1h-1zm14 0h1v1h-1zm27 0h1v1h-1zm14 0h1v1h-1zm14 0h1v1h-1zm13 0h1v1h-1zm27 0h1v1h-1zm14 0h1v1h-1zm14 0h1v1h-1zm13 0h1v1h-1zm28 0h1v1h-1zm13 0h1v1h-1zm14 0h1v1h-1zm14 0h1v1h-1zm-887 14h1v1h-1zm13 0h1v1h-1zm14 0h1v1h-1zm14 0h1v1h-1zm13 0h1v1h-1zm14 0h1v1h-1zm14 0h1v1h-1zm13 0h1v1h-1zm14 0h1v1h-1zm13 0h1v1h-1zm14 0h1v1h-1zm14 0h1v1h-1zm13 0h1v1h-1zm14 0h1v1h-1zm14 0h1v1h-1zm13 0h1v1h-1zm14 0h1v1h-1zm14 0h1v1h-1zm13 0h1v1h-1zm14 0h1v1h-1zm14 0h1v1h-1zm13 0h1v1h-1zm14 0h1v1h-1zm13 0h1v1h-1zm14 0h1v1h-1zm14 0h1v1h-1zm13 0h1v1h-1zm14 0h1v1h-1zm14 0h1v1h-1zm13 0h1v1h-1zm14 0h1v1h-1zm14 0h1v1h-1zm13 0h1v1h-1zm14 0h1v1h-1zm14 0h1v1h-1zm13 0h1v1h-1zm14 0h1v1h-1zm14 0h1v1h-1zm13 0h1v1h-1zm14 0h1v1h-1zm13 0h1v1h-1zm14 0h1v1h-1zm14 0h1v1h-1zm13 0h1v1h-1zm14 0h1v1h-1zm14 0h1v1h-1zm13 0h1v1h-1zm14 0h1v1h-1zm14 0h1v1h-1zm13 0h1v1h-1zm14 0h1v1h-1zm14 0h1v1h-1zm13 0h1v1h-1zm14 0h1v1h-1zm14 0h1v1h-1zm13 0h1v1h-1zm14 0h1v1h-1zm13 0h1v1h-1zm14 0h1v1h-1zm14 0h1v1h-1zm13 0h1v1h-1zm14 0h1v1h-1zm14 0h1v1h-1zm13 0h1v1h-1zm14 0h1v1h-1zm14 0h1v1h-1zm13 0h1v1h-1zm-900 13h1v1h-1zm13 0h1v1h-1zm14 0h1v1h-1zm14 0h1v1h-1zm13 0h1v1h-1zm14 0h1v1h-1zm14 0h1v1h-1zm13 0h1v1h-1zm14 0h1v1h-1zm13 0h1v1h-1zm14 0h1v1h-1zm14 0h1v1h-1zm13 0h1v1h-1zm14 0h1v1h-1zm14 0h1v1h-1zm13 0h1v1h-1zm14 0h1v1h-1zm14 0h1v1h-1zm13 0h1v1h-1zm14 0h1v1h-1zm14 0h1v1h-1zm13 0h1v1h-1zm14 0h1v1h-1zm13 0h1v1h-1zm14 0h1v1h-1zm14 0h1v1h-1zm13 0h1v1h-1zm14 0h1v1h-1zm14 0h1v1h-1zm13 0h1v1h-1zm14 0h1v1h-1zm14 0h1v1h-1zm13 0h1v1h-1zm14 0h1v1h-1zm14 0h1v1h-1zm13 0h1v1h-1zm14 0h1v1h-1zm14 0h1v1h-1zm13 0h1v1h-1zm14 0h1v1h-1zm13 0h1v1h-1zm14 0h1v1h-1zm14 0h1v1h-1zm13 0h1v1h-1zm14 0h1v1h-1zm14 0h1v1h-1zm13 0h1v1h-1zm14 0h1v1h-1zm14 0h1v1h-1zm13 0h1v1h-1zm14 0h1v1h-1zm14 0h1v1h-1zm13 0h1v1h-1zm14 0h1v1h-1zm14 0h1v1h-1zm13 0h1v1h-1zm14 0h1v1h-1zm13 0h1v1h-1zm14 0h1v1h-1zm14 0h1v1h-1zm13 0h1v1h-1zm14 0h1v1h-1zm14 0h1v1h-1zm13 0h1v1h-1zm14 0h1v1h-1zm14 0h1v1h-1zm13 0h1v1h-1zm-900 14h1v1h-1zm13 0h1v1h-1zm14 0h1v1h-1zm14 0h1v1h-1zm13 0h1v1h-1zm14 0h1v1h-1zm14 0h1v1h-1zm13 0h1v1h-1zm14 0h1v1h-1zm13 0h1v1h-1zm14 0h1v1h-1zm14 0h1v1h-1zm13 0h1v1h-1zm14 0h1v1h-1zm14 0h1v1h-1zm13 0h1v1h-1zm14 0h1v1h-1zm14 0h1v1h-1zm13 0h1v1h-1zm14 0h1v1h-1zm14 0h1v1h-1zm13 0h1v1h-1zm14 0h1v1h-1zm13 0h1v1h-1zm14 0h1v1h-1zm14 0h1v1h-1zm13 0h1v1h-1zm14 0h1v1h-1zm14 0h1v1h-1zm13 0h1v1h-1zm14 0h1v1h-1zm14 0h1v1h-1zm13 0h1v1h-1zm14 0h1v1h-1zm14 0h1v1h-1zm13 0h1v1h-1zm14 0h1v1h-1zm14 0h1v1h-1zm13 0h1v1h-1zm14 0h1v1h-1zm13 0h1v1h-1zm14 0h1v1h-1zm14 0h1v1h-1zm13 0h1v1h-1zm14 0h1v1h-1zm14 0h1v1h-1zm13 0h1v1h-1zm14 0h1v1h-1zm14 0h1v1h-1zm13 0h1v1h-1zm14 0h1v1h-1zm14 0h1v1h-1zm13 0h1v1h-1zm14 0h1v1h-1zm14 0h1v1h-1zm13 0h1v1h-1zm14 0h1v1h-1zm13 0h1v1h-1zm14 0h1v1h-1zm14 0h1v1h-1zm13 0h1v1h-1zm14 0h1v1h-1zm14 0h1v1h-1zm13 0h1v1h-1zm14 0h1v1h-1zm14 0h1v1h-1zm13 0h1v1h-1zm-900 14h1v1h-1zm13 0h1v1h-1zm14 0h1v1h-1zm14 0h1v1h-1zm13 0h1v1h-1zm14 0h1v1h-1zm14 0h1v1h-1zm13 0h1v1h-1zm14 0h1v1h-1zm13 0h1v1h-1zm14 0h1v1h-1zm14 0h1v1h-1zm13 0h1v1h-1zm14 0h1v1h-1zm14 0h1v1h-1zm13 0h1v1h-1zm14 0h1v1h-1zm14 0h1v1h-1zm13 0h1v1h-1zm14 0h1v1h-1zm14 0h1v1h-1zm13 0h1v1h-1zm14 0h1v1h-1zm13 0h1v1h-1zm14 0h1v1h-1zm14 0h1v1h-1zm13 0h1v1h-1zm14 0h1v1h-1zm14 0h1v1h-1zm13 0h1v1h-1zm14 0h1v1h-1zm14 0h1v1h-1zm13 0h1v1h-1zm14 0h1v1h-1zm14 0h1v1h-1zm13 0h1v1h-1zm14 0h1v1h-1zm14 0h1v1h-1zm13 0h1v1h-1zm14 0h1v1h-1zm13 0h1v1h-1zm14 0h1v1h-1zm14 0h1v1h-1zm13 0h1v1h-1zm14 0h1v1h-1zm14 0h1v1h-1zm13 0h1v1h-1zm14 0h1v1h-1zm14 0h1v1h-1zm13 0h1v1h-1zm14 0h1v1h-1zm14 0h1v1h-1zm13 0h1v1h-1zm14 0h1v1h-1zm14 0h1v1h-1zm13 0h1v1h-1zm14 0h1v1h-1zm13 0h1v1h-1zm14 0h1v1h-1zm14 0h1v1h-1zm13 0h1v1h-1zm14 0h1v1h-1zm14 0h1v1h-1zm13 0h1v1h-1zm14 0h1v1h-1zm14 0h1v1h-1zm13 0h1v1h-1zm-900 13h1v1h-1zm27 0h1v1h-1zm14 0h1v1h-1zm13 0h1v1h-1zm14 0h1v1h-1zm27 0h1v1h-1zm14 0h1v1h-1zm13 0h1v1h-1zm14 0h1v1h-1zm27 0h1v1h-1zm14 0h1v1h-1zm14 0h1v1h-1zm13 0h1v1h-1zm28 0h1v1h-1zm13 0h1v1h-1zm14 0h1v1h-1zm14 0h1v1h-1zm27 0h1v1h-1zm13 0h1v1h-1zm14 0h1v1h-1zm14 0h1v1h-1zm27 0h1v1h-1zm14 0h1v1h-1zm13 0h1v1h-1zm14 0h1v1h-1zm27 0h1v1h-1zm14 0h1v1h-1zm14 0h1v1h-1zm13 0h1v1h-1zm28 0h1v1h-1zm13 0h1v1h-1zm14 0h1v1h-1zm13 0h1v1h-1zm28 0h1v1h-1zm13 0h1v1h-1zm14 0h1v1h-1zm14 0h1v1h-1zm27 0h1v1h-1zm14 0h1v1h-1zm13 0h1v1h-1zm14 0h1v1h-1zm27 0h1v1h-1zm14 0h1v1h-1zm14 0h1v1h-1zm13 0h1v1h-1zm27 0h1v1h-1zm14 0h1v1h-1zm14 0h1v1h-1zm13 0h1v1h-1zm28 0h1v1h-1zm13 0h1v1h-1zm14 0h1v1h-1zm14 0h1v1h-1zm-887 14h1v1h-1zm13 0h1v1h-1zm14 0h1v1h-1zm14 0h1v1h-1zm13 0h1v1h-1zm14 0h1v1h-1zm14 0h1v1h-1zm13 0h1v1h-1zm14 0h1v1h-1zm13 0h1v1h-1zm14 0h1v1h-1zm14 0h1v1h-1zm13 0h1v1h-1zm14 0h1v1h-1zm14 0h1v1h-1zm13 0h1v1h-1zm14 0h1v1h-1zm14 0h1v1h-1zm13 0h1v1h-1zm14 0h1v1h-1zm14 0h1v1h-1zm13 0h1v1h-1zm14 0h1v1h-1zm13 0h1v1h-1zm14 0h1v1h-1zm14 0h1v1h-1zm13 0h1v1h-1zm14 0h1v1h-1zm14 0h1v1h-1zm13 0h1v1h-1zm14 0h1v1h-1zm14 0h1v1h-1zm13 0h1v1h-1zm14 0h1v1h-1zm14 0h1v1h-1zm13 0h1v1h-1zm14 0h1v1h-1zm14 0h1v1h-1zm13 0h1v1h-1zm14 0h1v1h-1zm13 0h1v1h-1zm14 0h1v1h-1zm14 0h1v1h-1zm13 0h1v1h-1zm14 0h1v1h-1zm14 0h1v1h-1zm13 0h1v1h-1zm14 0h1v1h-1zm14 0h1v1h-1zm13 0h1v1h-1zm14 0h1v1h-1zm14 0h1v1h-1zm13 0h1v1h-1zm14 0h1v1h-1zm14 0h1v1h-1zm13 0h1v1h-1zm14 0h1v1h-1zm13 0h1v1h-1zm14 0h1v1h-1zm14 0h1v1h-1zm13 0h1v1h-1zm14 0h1v1h-1zm14 0h1v1h-1zm13 0h1v1h-1zm14 0h1v1h-1zm14 0h1v1h-1zm13 0h1v1h-1zm-900 13h1v1h-1zm13 0h1v1h-1zm14 0h1v1h-1zm14 0h1v1h-1zm13 0h1v1h-1zm14 0h1v1h-1zm14 0h1v1h-1zm13 0h1v1h-1zm14 0h1v1h-1zm13 0h1v1h-1zm14 0h1v1h-1zm14 0h1v1h-1zm13 0h1v1h-1zm14 0h1v1h-1zm14 0h1v1h-1zm13 0h1v1h-1zm14 0h1v1h-1zm14 0h1v1h-1zm13 0h1v1h-1zm14 0h1v1h-1zm14 0h1v1h-1zm13 0h1v1h-1zm14 0h1v1h-1zm13 0h1v1h-1zm14 0h1v1h-1zm14 0h1v1h-1zm13 0h1v1h-1zm14 0h1v1h-1zm14 0h1v1h-1zm13 0h1v1h-1zm14 0h1v1h-1zm14 0h1v1h-1zm13 0h1v1h-1zm14 0h1v1h-1zm14 0h1v1h-1zm13 0h1v1h-1zm14 0h1v1h-1zm14 0h1v1h-1zm13 0h1v1h-1zm14 0h1v1h-1zm13 0h1v1h-1zm14 0h1v1h-1zm14 0h1v1h-1zm13 0h1v1h-1zm14 0h1v1h-1zm14 0h1v1h-1zm13 0h1v1h-1zm14 0h1v1h-1zm14 0h1v1h-1zm13 0h1v1h-1zm14 0h1v1h-1zm14 0h1v1h-1zm13 0h1v1h-1zm14 0h1v1h-1zm14 0h1v1h-1zm13 0h1v1h-1zm14 0h1v1h-1zm13 0h1v1h-1zm14 0h1v1h-1zm14 0h1v1h-1zm13 0h1v1h-1zm14 0h1v1h-1zm14 0h1v1h-1zm13 0h1v1h-1zm14 0h1v1h-1zm14 0h1v1h-1zm13 0h1v1h-1zm-900 14h1v1h-1zm13 0h1v1h-1zm14 0h1v1h-1zm14 0h1v1h-1zm13 0h1v1h-1zm14 0h1v1h-1zm14 0h1v1h-1zm13 0h1v1h-1zm14 0h1v1h-1zm13 0h1v1h-1zm14 0h1v1h-1zm14 0h1v1h-1zm13 0h1v1h-1zm14 0h1v1h-1zm14 0h1v1h-1zm13 0h1v1h-1zm14 0h1v1h-1zm14 0h1v1h-1zm13 0h1v1h-1zm14 0h1v1h-1zm14 0h1v1h-1zm13 0h1v1h-1zm14 0h1v1h-1zm13 0h1v1h-1zm14 0h1v1h-1zm14 0h1v1h-1zm13 0h1v1h-1zm14 0h1v1h-1zm14 0h1v1h-1zm13 0h1v1h-1zm14 0h1v1h-1zm14 0h1v1h-1zm13 0h1v1h-1zm14 0h1v1h-1zm14 0h1v1h-1zm13 0h1v1h-1zm14 0h1v1h-1zm14 0h1v1h-1zm13 0h1v1h-1zm14 0h1v1h-1zm13 0h1v1h-1zm14 0h1v1h-1zm14 0h1v1h-1zm13 0h1v1h-1zm14 0h1v1h-1zm14 0h1v1h-1zm13 0h1v1h-1zm14 0h1v1h-1zm14 0h1v1h-1zm13 0h1v1h-1zm14 0h1v1h-1zm14 0h1v1h-1zm13 0h1v1h-1zm14 0h1v1h-1zm14 0h1v1h-1zm13 0h1v1h-1zm14 0h1v1h-1zm13 0h1v1h-1zm14 0h1v1h-1zm14 0h1v1h-1zm13 0h1v1h-1zm14 0h1v1h-1zm14 0h1v1h-1zm13 0h1v1h-1zm14 0h1v1h-1zm14 0h1v1h-1zm13 0h1v1h-1zm-900 14h1v1h-1zm13 0h1v1h-1zm14 0h1v1h-1zm14 0h1v1h-1zm13 0h1v1h-1zm14 0h1v1h-1zm14 0h1v1h-1zm13 0h1v1h-1zm14 0h1v1h-1zm13 0h1v1h-1zm14 0h1v1h-1zm14 0h1v1h-1zm13 0h1v1h-1zm14 0h1v1h-1zm14 0h1v1h-1zm13 0h1v1h-1zm14 0h1v1h-1zm14 0h1v1h-1zm13 0h1v1h-1zm14 0h1v1h-1zm14 0h1v1h-1zm13 0h1v1h-1zm14 0h1v1h-1zm13 0h1v1h-1zm14 0h1v1h-1zm14 0h1v1h-1zm13 0h1v1h-1zm14 0h1v1h-1zm14 0h1v1h-1zm13 0h1v1h-1zm14 0h1v1h-1zm14 0h1v1h-1zm13 0h1v1h-1zm14 0h1v1h-1zm14 0h1v1h-1zm13 0h1v1h-1zm14 0h1v1h-1zm14 0h1v1h-1zm13 0h1v1h-1zm14 0h1v1h-1zm13 0h1v1h-1zm14 0h1v1h-1zm14 0h1v1h-1zm13 0h1v1h-1zm14 0h1v1h-1zm14 0h1v1h-1zm13 0h1v1h-1zm14 0h1v1h-1zm14 0h1v1h-1zm13 0h1v1h-1zm14 0h1v1h-1zm14 0h1v1h-1zm13 0h1v1h-1zm14 0h1v1h-1zm14 0h1v1h-1zm13 0h1v1h-1zm14 0h1v1h-1zm13 0h1v1h-1zm14 0h1v1h-1zm14 0h1v1h-1zm13 0h1v1h-1zm14 0h1v1h-1zm14 0h1v1h-1zm13 0h1v1h-1zm14 0h1v1h-1zm14 0h1v1h-1zm13 0h1v1h-1zm-900 13h1v1h-1zm27 0h1v1h-1zm14 0h1v1h-1zm13 0h1v1h-1zm14 0h1v1h-1zm27 0h1v1h-1zm14 0h1v1h-1zm13 0h1v1h-1zm14 0h1v1h-1zm27 0h1v1h-1zm14 0h1v1h-1zm14 0h1v1h-1zm13 0h1v1h-1zm28 0h1v1h-1zm13 0h1v1h-1zm14 0h1v1h-1zm14 0h1v1h-1zm27 0h1v1h-1zm13 0h1v1h-1zm14 0h1v1h-1zm14 0h1v1h-1zm27 0h1v1h-1zm14 0h1v1h-1zm13 0h1v1h-1zm14 0h1v1h-1zm27 0h1v1h-1zm14 0h1v1h-1zm14 0h1v1h-1zm13 0h1v1h-1zm28 0h1v1h-1zm13 0h1v1h-1zm14 0h1v1h-1zm13 0h1v1h-1zm28 0h1v1h-1zm13 0h1v1h-1zm14 0h1v1h-1zm14 0h1v1h-1zm27 0h1v1h-1zm14 0h1v1h-1zm13 0h1v1h-1zm14 0h1v1h-1zm27 0h1v1h-1zm14 0h1v1h-1zm14 0h1v1h-1zm13 0h1v1h-1zm27 0h1v1h-1zm14 0h1v1h-1zm14 0h1v1h-1zm13 0h1v1h-1zm28 0h1v1h-1zm13 0h1v1h-1zm14 0h1v1h-1zm14 0h1v1h-1zm-887 14h1v1h-1zm13 0h1v1h-1zm14 0h1v1h-1zm14 0h1v1h-1zm13 0h1v1h-1zm14 0h1v1h-1zm14 0h1v1h-1zm13 0h1v1h-1zm14 0h1v1h-1zm13 0h1v1h-1zm14 0h1v1h-1zm14 0h1v1h-1zm13 0h1v1h-1zm14 0h1v1h-1zm14 0h1v1h-1zm13 0h1v1h-1zm14 0h1v1h-1zm14 0h1v1h-1zm13 0h1v1h-1zm14 0h1v1h-1zm14 0h1v1h-1zm13 0h1v1h-1zm14 0h1v1h-1zm13 0h1v1h-1zm14 0h1v1h-1zm14 0h1v1h-1zm13 0h1v1h-1zm14 0h1v1h-1zm14 0h1v1h-1zm13 0h1v1h-1zm14 0h1v1h-1zm14 0h1v1h-1zm13 0h1v1h-1zm14 0h1v1h-1zm14 0h1v1h-1zm13 0h1v1h-1zm14 0h1v1h-1zm14 0h1v1h-1zm13 0h1v1h-1zm14 0h1v1h-1zm13 0h1v1h-1zm14 0h1v1h-1zm14 0h1v1h-1zm13 0h1v1h-1zm14 0h1v1h-1zm14 0h1v1h-1zm13 0h1v1h-1zm14 0h1v1h-1zm14 0h1v1h-1zm13 0h1v1h-1zm14 0h1v1h-1zm14 0h1v1h-1zm13 0h1v1h-1zm14 0h1v1h-1zm14 0h1v1h-1zm13 0h1v1h-1zm14 0h1v1h-1zm13 0h1v1h-1zm14 0h1v1h-1zm14 0h1v1h-1zm13 0h1v1h-1zm14 0h1v1h-1zm14 0h1v1h-1zm13 0h1v1h-1zm14 0h1v1h-1zm14 0h1v1h-1zm13 0h1v1h-1zm-900 14h1v1h-1zm13 0h1v1h-1zm14 0h1v1h-1zm14 0h1v1h-1zm13 0h1v1h-1zm14 0h1v1h-1zm14 0h1v1h-1zm13 0h1v1h-1zm14 0h1v1h-1zm13 0h1v1h-1zm14 0h1v1h-1zm14 0h1v1h-1zm13 0h1v1h-1zm14 0h1v1h-1zm14 0h1v1h-1zm13 0h1v1h-1zm14 0h1v1h-1zm14 0h1v1h-1zm13 0h1v1h-1zm14 0h1v1h-1zm14 0h1v1h-1zm13 0h1v1h-1zm14 0h1v1h-1zm13 0h1v1h-1zm14 0h1v1h-1zm14 0h1v1h-1zm13 0h1v1h-1zm14 0h1v1h-1zm14 0h1v1h-1zm13 0h1v1h-1zm14 0h1v1h-1zm14 0h1v1h-1zm13 0h1v1h-1zm14 0h1v1h-1zm14 0h1v1h-1zm13 0h1v1h-1zm14 0h1v1h-1zm14 0h1v1h-1zm13 0h1v1h-1zm14 0h1v1h-1zm13 0h1v1h-1zm14 0h1v1h-1zm14 0h1v1h-1zm13 0h1v1h-1zm14 0h1v1h-1zm14 0h1v1h-1zm13 0h1v1h-1zm14 0h1v1h-1zm14 0h1v1h-1zm13 0h1v1h-1zm14 0h1v1h-1zm14 0h1v1h-1zm13 0h1v1h-1zm14 0h1v1h-1zm14 0h1v1h-1zm13 0h1v1h-1zm14 0h1v1h-1zm13 0h1v1h-1zm14 0h1v1h-1zm14 0h1v1h-1zm13 0h1v1h-1zm14 0h1v1h-1zm14 0h1v1h-1zm13 0h1v1h-1zm14 0h1v1h-1zm14 0h1v1h-1zm13 0h1v1h-1zm-900 13h1v1h-1zm13 0h1v1h-1zm14 0h1v1h-1zm14 0h1v1h-1zm13 0h1v1h-1zm14 0h1v1h-1zm14 0h1v1h-1zm13 0h1v1h-1zm14 0h1v1h-1zm13 0h1v1h-1zm14 0h1v1h-1zm14 0h1v1h-1zm13 0h1v1h-1zm14 0h1v1h-1zm14 0h1v1h-1zm13 0h1v1h-1zm14 0h1v1h-1zm14 0h1v1h-1zm13 0h1v1h-1zm14 0h1v1h-1zm14 0h1v1h-1zm13 0h1v1h-1zm14 0h1v1h-1zm13 0h1v1h-1zm14 0h1v1h-1zm14 0h1v1h-1zm13 0h1v1h-1zm14 0h1v1h-1zm14 0h1v1h-1zm13 0h1v1h-1zm14 0h1v1h-1zm14 0h1v1h-1zm13 0h1v1h-1zm14 0h1v1h-1zm14 0h1v1h-1zm13 0h1v1h-1zm14 0h1v1h-1zm14 0h1v1h-1zm13 0h1v1h-1zm14 0h1v1h-1zm13 0h1v1h-1zm14 0h1v1h-1zm14 0h1v1h-1zm13 0h1v1h-1zm14 0h1v1h-1zm14 0h1v1h-1zm13 0h1v1h-1zm14 0h1v1h-1zm14 0h1v1h-1zm13 0h1v1h-1zm14 0h1v1h-1zm14 0h1v1h-1zm13 0h1v1h-1zm14 0h1v1h-1zm14 0h1v1h-1zm13 0h1v1h-1zm14 0h1v1h-1zm13 0h1v1h-1zm14 0h1v1h-1zm14 0h1v1h-1zm13 0h1v1h-1zm14 0h1v1h-1zm14 0h1v1h-1zm13 0h1v1h-1zm14 0h1v1h-1zm14 0h1v1h-1zm13 0h1v1h-1zm-900 14h1v1h-1zm13 0h1v1h-1zm14 0h1v1h-1zm14 0h1v1h-1zm13 0h1v1h-1zm14 0h1v1h-1zm14 0h1v1h-1zm13 0h1v1h-1zm14 0h1v1h-1zm13 0h1v1h-1zm14 0h1v1h-1zm14 0h1v1h-1zm13 0h1v1h-1zm14 0h1v1h-1zm14 0h1v1h-1zm13 0h1v1h-1zm14 0h1v1h-1zm14 0h1v1h-1zm13 0h1v1h-1zm14 0h1v1h-1zm14 0h1v1h-1zm13 0h1v1h-1zm14 0h1v1h-1zm13 0h1v1h-1zm14 0h1v1h-1zm14 0h1v1h-1zm13 0h1v1h-1zm14 0h1v1h-1zm14 0h1v1h-1zm13 0h1v1h-1zm14 0h1v1h-1zm14 0h1v1h-1zm13 0h1v1h-1zm14 0h1v1h-1zm14 0h1v1h-1zm13 0h1v1h-1zm14 0h1v1h-1zm14 0h1v1h-1zm13 0h1v1h-1zm14 0h1v1h-1zm13 0h1v1h-1zm14 0h1v1h-1zm14 0h1v1h-1zm13 0h1v1h-1zm14 0h1v1h-1zm14 0h1v1h-1zm13 0h1v1h-1zm14 0h1v1h-1zm14 0h1v1h-1zm13 0h1v1h-1zm14 0h1v1h-1zm14 0h1v1h-1zm13 0h1v1h-1zm14 0h1v1h-1zm14 0h1v1h-1zm13 0h1v1h-1zm14 0h1v1h-1zm13 0h1v1h-1zm14 0h1v1h-1zm14 0h1v1h-1zm13 0h1v1h-1zm14 0h1v1h-1zm14 0h1v1h-1zm13 0h1v1h-1zm14 0h1v1h-1zm14 0h1v1h-1zm13 0h1v1h-1zm-900 14h1v1h-1zm27 0h1v1h-1zm14 0h1v1h-1zm13 0h1v1h-1zm14 0h1v1h-1zm27 0h1v1h-1zm14 0h1v1h-1zm13 0h1v1h-1zm14 0h1v1h-1zm27 0h1v1h-1zm14 0h1v1h-1zm14 0h1v1h-1zm13 0h1v1h-1zm28 0h1v1h-1zm13 0h1v1h-1zm14 0h1v1h-1zm14 0h1v1h-1zm27 0h1v1h-1zm13 0h1v1h-1zm14 0h1v1h-1zm14 0h1v1h-1zm27 0h1v1h-1zm14 0h1v1h-1zm13 0h1v1h-1zm14 0h1v1h-1zm27 0h1v1h-1zm14 0h1v1h-1zm14 0h1v1h-1zm13 0h1v1h-1zm28 0h1v1h-1zm13 0h1v1h-1zm14 0h1v1h-1zm13 0h1v1h-1zm28 0h1v1h-1zm13 0h1v1h-1zm14 0h1v1h-1zm14 0h1v1h-1zm27 0h1v1h-1zm14 0h1v1h-1zm13 0h1v1h-1zm14 0h1v1h-1zm27 0h1v1h-1zm14 0h1v1h-1zm14 0h1v1h-1zm13 0h1v1h-1zm27 0h1v1h-1zm14 0h1v1h-1zm14 0h1v1h-1zm13 0h1v1h-1zm28 0h1v1h-1zm13 0h1v1h-1zm14 0h1v1h-1zm14 0h1v1h-1zm-887 13h1v1h-1zm13 0h1v1h-1zm14 0h1v1h-1zm14 0h1v1h-1zm13 0h1v1h-1zm14 0h1v1h-1zm14 0h1v1h-1zm13 0h1v1h-1zm14 0h1v1h-1zm13 0h1v1h-1zm14 0h1v1h-1zm14 0h1v1h-1zm13 0h1v1h-1zm14 0h1v1h-1zm14 0h1v1h-1zm13 0h1v1h-1zm14 0h1v1h-1zm14 0h1v1h-1zm13 0h1v1h-1zm14 0h1v1h-1zm14 0h1v1h-1zm13 0h1v1h-1zm14 0h1v1h-1zm13 0h1v1h-1zm14 0h1v1h-1zm14 0h1v1h-1zm13 0h1v1h-1zm14 0h1v1h-1zm14 0h1v1h-1zm13 0h1v1h-1zm14 0h1v1h-1zm14 0h1v1h-1zm13 0h1v1h-1zm14 0h1v1h-1zm14 0h1v1h-1zm13 0h1v1h-1zm14 0h1v1h-1zm14 0h1v1h-1zm13 0h1v1h-1zm14 0h1v1h-1zm13 0h1v1h-1zm14 0h1v1h-1zm14 0h1v1h-1zm13 0h1v1h-1zm14 0h1v1h-1zm14 0h1v1h-1zm13 0h1v1h-1zm14 0h1v1h-1zm14 0h1v1h-1zm13 0h1v1h-1zm14 0h1v1h-1zm14 0h1v1h-1zm13 0h1v1h-1zm14 0h1v1h-1zm14 0h1v1h-1zm13 0h1v1h-1zm14 0h1v1h-1zm13 0h1v1h-1zm14 0h1v1h-1zm14 0h1v1h-1zm13 0h1v1h-1zm14 0h1v1h-1zm14 0h1v1h-1zm13 0h1v1h-1zm14 0h1v1h-1zm14 0h1v1h-1zm13 0h1v1h-1zm-900 14h1v1h-1zm13 0h1v1h-1zm14 0h1v1h-1zm14 0h1v1h-1zm13 0h1v1h-1zm14 0h1v1h-1zm14 0h1v1h-1zm13 0h1v1h-1zm14 0h1v1h-1zm13 0h1v1h-1zm14 0h1v1h-1zm14 0h1v1h-1zm13 0h1v1h-1zm14 0h1v1h-1zm14 0h1v1h-1zm13 0h1v1h-1zm14 0h1v1h-1zm14 0h1v1h-1zm13 0h1v1h-1zm14 0h1v1h-1zm14 0h1v1h-1zm13 0h1v1h-1zm14 0h1v1h-1zm13 0h1v1h-1zm14 0h1v1h-1zm14 0h1v1h-1zm13 0h1v1h-1zm14 0h1v1h-1zm14 0h1v1h-1zm13 0h1v1h-1zm14 0h1v1h-1zm14 0h1v1h-1zm13 0h1v1h-1zm14 0h1v1h-1zm14 0h1v1h-1zm13 0h1v1h-1zm14 0h1v1h-1zm14 0h1v1h-1zm13 0h1v1h-1zm14 0h1v1h-1zm13 0h1v1h-1zm14 0h1v1h-1zm14 0h1v1h-1zm13 0h1v1h-1zm14 0h1v1h-1zm14 0h1v1h-1zm13 0h1v1h-1zm14 0h1v1h-1zm14 0h1v1h-1zm13 0h1v1h-1zm14 0h1v1h-1zm14 0h1v1h-1zm13 0h1v1h-1zm14 0h1v1h-1zm14 0h1v1h-1zm13 0h1v1h-1zm14 0h1v1h-1zm13 0h1v1h-1zm14 0h1v1h-1zm14 0h1v1h-1zm13 0h1v1h-1zm14 0h1v1h-1zm14 0h1v1h-1zm13 0h1v1h-1zm14 0h1v1h-1zm14 0h1v1h-1zm13 0h1v1h-1zm-900 14h1v1h-1zm13 0h1v1h-1zm14 0h1v1h-1zm14 0h1v1h-1zm13 0h1v1h-1zm14 0h1v1h-1zm14 0h1v1h-1zm13 0h1v1h-1zm14 0h1v1h-1zm13 0h1v1h-1zm14 0h1v1h-1zm14 0h1v1h-1zm13 0h1v1h-1zm14 0h1v1h-1zm14 0h1v1h-1zm13 0h1v1h-1zm14 0h1v1h-1zm14 0h1v1h-1zm13 0h1v1h-1zm14 0h1v1h-1zm14 0h1v1h-1zm13 0h1v1h-1zm14 0h1v1h-1zm13 0h1v1h-1zm14 0h1v1h-1zm14 0h1v1h-1zm13 0h1v1h-1zm14 0h1v1h-1zm14 0h1v1h-1zm13 0h1v1h-1zm14 0h1v1h-1zm14 0h1v1h-1zm13 0h1v1h-1zm14 0h1v1h-1zm14 0h1v1h-1zm13 0h1v1h-1zm14 0h1v1h-1zm14 0h1v1h-1zm13 0h1v1h-1zm14 0h1v1h-1zm13 0h1v1h-1zm14 0h1v1h-1zm14 0h1v1h-1zm13 0h1v1h-1zm14 0h1v1h-1zm14 0h1v1h-1zm13 0h1v1h-1zm14 0h1v1h-1zm14 0h1v1h-1zm13 0h1v1h-1zm14 0h1v1h-1zm14 0h1v1h-1zm13 0h1v1h-1zm14 0h1v1h-1zm14 0h1v1h-1zm13 0h1v1h-1zm14 0h1v1h-1zm13 0h1v1h-1zm14 0h1v1h-1zm14 0h1v1h-1zm13 0h1v1h-1zm14 0h1v1h-1zm14 0h1v1h-1zm13 0h1v1h-1zm14 0h1v1h-1zm14 0h1v1h-1zm13 0h1v1h-1zm-900 13h1v1h-1zm13 0h1v1h-1zm14 0h1v1h-1zm14 0h1v1h-1zm13 0h1v1h-1zm14 0h1v1h-1zm14 0h1v1h-1zm13 0h1v1h-1zm14 0h1v1h-1zm13 0h1v1h-1zm14 0h1v1h-1zm14 0h1v1h-1zm13 0h1v1h-1zm14 0h1v1h-1zm14 0h1v1h-1zm13 0h1v1h-1zm14 0h1v1h-1zm14 0h1v1h-1zm13 0h1v1h-1zm14 0h1v1h-1zm14 0h1v1h-1zm13 0h1v1h-1zm14 0h1v1h-1zm13 0h1v1h-1zm14 0h1v1h-1zm14 0h1v1h-1zm13 0h1v1h-1zm14 0h1v1h-1zm14 0h1v1h-1zm13 0h1v1h-1zm14 0h1v1h-1zm14 0h1v1h-1zm13 0h1v1h-1zm14 0h1v1h-1zm14 0h1v1h-1zm13 0h1v1h-1zm14 0h1v1h-1zm14 0h1v1h-1zm13 0h1v1h-1zm14 0h1v1h-1zm13 0h1v1h-1zm14 0h1v1h-1zm14 0h1v1h-1zm13 0h1v1h-1zm14 0h1v1h-1zm14 0h1v1h-1zm13 0h1v1h-1zm14 0h1v1h-1zm14 0h1v1h-1zm13 0h1v1h-1zm14 0h1v1h-1zm14 0h1v1h-1zm13 0h1v1h-1zm14 0h1v1h-1zm14 0h1v1h-1zm13 0h1v1h-1zm14 0h1v1h-1zm13 0h1v1h-1zm14 0h1v1h-1zm14 0h1v1h-1zm13 0h1v1h-1zm14 0h1v1h-1zm14 0h1v1h-1zm13 0h1v1h-1zm14 0h1v1h-1zm14 0h1v1h-1zm13 0h1v1h-1zm-900 14h1v1h-1zm27 0h1v1h-1zm14 0h1v1h-1zm13 0h1v1h-1zm14 0h1v1h-1zm27 0h1v1h-1zm14 0h1v1h-1zm13 0h1v1h-1zm14 0h1v1h-1zm27 0h1v1h-1zm14 0h1v1h-1zm14 0h1v1h-1zm13 0h1v1h-1zm28 0h1v1h-1zm13 0h1v1h-1zm14 0h1v1h-1zm14 0h1v1h-1zm27 0h1v1h-1zm13 0h1v1h-1zm14 0h1v1h-1zm14 0h1v1h-1zm27 0h1v1h-1zm14 0h1v1h-1zm13 0h1v1h-1zm14 0h1v1h-1zm27 0h1v1h-1zm14 0h1v1h-1zm14 0h1v1h-1zm13 0h1v1h-1zm28 0h1v1h-1zm13 0h1v1h-1zm14 0h1v1h-1zm13 0h1v1h-1zm28 0h1v1h-1zm13 0h1v1h-1zm14 0h1v1h-1zm14 0h1v1h-1zm27 0h1v1h-1zm14 0h1v1h-1zm13 0h1v1h-1zm14 0h1v1h-1zm27 0h1v1h-1zm14 0h1v1h-1zm14 0h1v1h-1zm13 0h1v1h-1zm27 0h1v1h-1zm14 0h1v1h-1zm14 0h1v1h-1zm13 0h1v1h-1zm28 0h1v1h-1zm13 0h1v1h-1zm14 0h1v1h-1zm14 0h1v1h-1zm-887 13h1v1h-1zm13 0h1v1h-1zm14 0h1v1h-1zm14 0h1v1h-1zm13 0h1v1h-1zm14 0h1v1h-1zm14 0h1v1h-1zm13 0h1v1h-1zm14 0h1v1h-1zm13 0h1v1h-1zm14 0h1v1h-1zm14 0h1v1h-1zm13 0h1v1h-1zm14 0h1v1h-1zm14 0h1v1h-1zm13 0h1v1h-1zm14 0h1v1h-1zm14 0h1v1h-1zm13 0h1v1h-1zm14 0h1v1h-1zm14 0h1v1h-1zm13 0h1v1h-1zm14 0h1v1h-1zm13 0h1v1h-1zm14 0h1v1h-1zm14 0h1v1h-1zm13 0h1v1h-1zm14 0h1v1h-1zm14 0h1v1h-1zm13 0h1v1h-1zm14 0h1v1h-1zm14 0h1v1h-1zm13 0h1v1h-1zm14 0h1v1h-1zm14 0h1v1h-1zm13 0h1v1h-1zm14 0h1v1h-1zm14 0h1v1h-1zm13 0h1v1h-1zm14 0h1v1h-1zm13 0h1v1h-1zm14 0h1v1h-1zm14 0h1v1h-1zm13 0h1v1h-1zm14 0h1v1h-1zm14 0h1v1h-1zm13 0h1v1h-1zm14 0h1v1h-1zm14 0h1v1h-1zm13 0h1v1h-1zm14 0h1v1h-1zm14 0h1v1h-1zm13 0h1v1h-1zm14 0h1v1h-1zm14 0h1v1h-1zm13 0h1v1h-1zm14 0h1v1h-1zm13 0h1v1h-1zm14 0h1v1h-1zm14 0h1v1h-1zm13 0h1v1h-1zm14 0h1v1h-1zm14 0h1v1h-1zm13 0h1v1h-1zm14 0h1v1h-1zm14 0h1v1h-1zm13 0h1v1h-1zm-900 14h1v1h-1zm13 0h1v1h-1zm14 0h1v1h-1zm14 0h1v1h-1zm13 0h1v1h-1zm14 0h1v1h-1zm14 0h1v1h-1zm13 0h1v1h-1zm14 0h1v1h-1zm13 0h1v1h-1zm14 0h1v1h-1zm14 0h1v1h-1zm13 0h1v1h-1zm14 0h1v1h-1zm14 0h1v1h-1zm13 0h1v1h-1zm14 0h1v1h-1zm14 0h1v1h-1zm13 0h1v1h-1zm14 0h1v1h-1zm14 0h1v1h-1zm13 0h1v1h-1zm14 0h1v1h-1zm13 0h1v1h-1zm14 0h1v1h-1zm14 0h1v1h-1zm13 0h1v1h-1zm14 0h1v1h-1zm14 0h1v1h-1zm13 0h1v1h-1zm14 0h1v1h-1zm14 0h1v1h-1zm13 0h1v1h-1zm14 0h1v1h-1zm14 0h1v1h-1zm13 0h1v1h-1zm14 0h1v1h-1zm14 0h1v1h-1zm13 0h1v1h-1zm14 0h1v1h-1zm13 0h1v1h-1zm14 0h1v1h-1zm14 0h1v1h-1zm13 0h1v1h-1zm14 0h1v1h-1zm14 0h1v1h-1zm13 0h1v1h-1zm14 0h1v1h-1zm14 0h1v1h-1zm13 0h1v1h-1zm14 0h1v1h-1zm14 0h1v1h-1zm13 0h1v1h-1zm14 0h1v1h-1zm14 0h1v1h-1zm13 0h1v1h-1zm14 0h1v1h-1zm13 0h1v1h-1zm14 0h1v1h-1zm14 0h1v1h-1zm13 0h1v1h-1zm14 0h1v1h-1zm14 0h1v1h-1zm13 0h1v1h-1zm14 0h1v1h-1zm14 0h1v1h-1zm13 0h1v1h-1zm-900 14h1v1h-1zm13 0h1v1h-1zm14 0h1v1h-1zm14 0h1v1h-1zm13 0h1v1h-1zm14 0h1v1h-1zm14 0h1v1h-1zm13 0h1v1h-1zm14 0h1v1h-1zm13 0h1v1h-1zm14 0h1v1h-1zm14 0h1v1h-1zm13 0h1v1h-1zm14 0h1v1h-1zm14 0h1v1h-1zm13 0h1v1h-1zm14 0h1v1h-1zm14 0h1v1h-1zm13 0h1v1h-1zm14 0h1v1h-1zm14 0h1v1h-1zm13 0h1v1h-1zm14 0h1v1h-1zm13 0h1v1h-1zm14 0h1v1h-1zm14 0h1v1h-1zm13 0h1v1h-1zm14 0h1v1h-1zm14 0h1v1h-1zm13 0h1v1h-1zm14 0h1v1h-1zm14 0h1v1h-1zm13 0h1v1h-1zm14 0h1v1h-1zm14 0h1v1h-1zm13 0h1v1h-1zm14 0h1v1h-1zm14 0h1v1h-1zm13 0h1v1h-1zm14 0h1v1h-1zm13 0h1v1h-1zm14 0h1v1h-1zm14 0h1v1h-1zm13 0h1v1h-1zm14 0h1v1h-1zm14 0h1v1h-1zm13 0h1v1h-1zm14 0h1v1h-1zm14 0h1v1h-1zm13 0h1v1h-1zm14 0h1v1h-1zm14 0h1v1h-1zm13 0h1v1h-1zm14 0h1v1h-1zm14 0h1v1h-1zm13 0h1v1h-1zm14 0h1v1h-1zm13 0h1v1h-1zm14 0h1v1h-1zm14 0h1v1h-1zm13 0h1v1h-1zm14 0h1v1h-1zm14 0h1v1h-1zm13 0h1v1h-1zm14 0h1v1h-1zm14 0h1v1h-1zm13 0h1v1h-1zm-900 13h1v1h-1zm13 0h1v1h-1zm14 0h1v1h-1zm14 0h1v1h-1zm13 0h1v1h-1zm14 0h1v1h-1zm14 0h1v1h-1zm13 0h1v1h-1zm14 0h1v1h-1zm13 0h1v1h-1zm14 0h1v1h-1zm14 0h1v1h-1zm13 0h1v1h-1zm14 0h1v1h-1zm14 0h1v1h-1zm13 0h1v1h-1zm14 0h1v1h-1zm14 0h1v1h-1zm13 0h1v1h-1zm14 0h1v1h-1zm14 0h1v1h-1zm13 0h1v1h-1zm14 0h1v1h-1zm13 0h1v1h-1zm14 0h1v1h-1zm14 0h1v1h-1zm13 0h1v1h-1zm14 0h1v1h-1zm14 0h1v1h-1zm13 0h1v1h-1zm14 0h1v1h-1zm14 0h1v1h-1zm13 0h1v1h-1zm14 0h1v1h-1zm14 0h1v1h-1zm13 0h1v1h-1zm14 0h1v1h-1zm14 0h1v1h-1zm13 0h1v1h-1zm14 0h1v1h-1zm13 0h1v1h-1zm14 0h1v1h-1zm14 0h1v1h-1zm13 0h1v1h-1zm14 0h1v1h-1zm14 0h1v1h-1zm13 0h1v1h-1zm14 0h1v1h-1zm14 0h1v1h-1zm13 0h1v1h-1zm14 0h1v1h-1zm14 0h1v1h-1zm13 0h1v1h-1zm14 0h1v1h-1zm14 0h1v1h-1zm13 0h1v1h-1zm14 0h1v1h-1zm13 0h1v1h-1zm14 0h1v1h-1zm14 0h1v1h-1zm13 0h1v1h-1zm14 0h1v1h-1zm14 0h1v1h-1zm13 0h1v1h-1zm14 0h1v1h-1zm14 0h1v1h-1zm13 0h1v1h-1zm-900 14h1v1h-1zm27 0h1v1h-1zm14 0h1v1h-1zm13 0h1v1h-1zm14 0h1v1h-1zm27 0h1v1h-1zm14 0h1v1h-1zm13 0h1v1h-1zm14 0h1v1h-1zm27 0h1v1h-1zm14 0h1v1h-1zm14 0h1v1h-1zm13 0h1v1h-1zm28 0h1v1h-1zm13 0h1v1h-1zm14 0h1v1h-1zm14 0h1v1h-1zm27 0h1v1h-1zm13 0h1v1h-1zm14 0h1v1h-1zm14 0h1v1h-1zm27 0h1v1h-1zm14 0h1v1h-1zm13 0h1v1h-1zm14 0h1v1h-1zm27 0h1v1h-1zm14 0h1v1h-1zm14 0h1v1h-1zm13 0h1v1h-1zm28 0h1v1h-1zm13 0h1v1h-1zm14 0h1v1h-1zm13 0h1v1h-1zm28 0h1v1h-1zm13 0h1v1h-1zm14 0h1v1h-1zm14 0h1v1h-1zm27 0h1v1h-1zm14 0h1v1h-1zm13 0h1v1h-1zm14 0h1v1h-1zm27 0h1v1h-1zm14 0h1v1h-1zm14 0h1v1h-1zm13 0h1v1h-1zm27 0h1v1h-1zm14 0h1v1h-1zm14 0h1v1h-1zm13 0h1v1h-1zm28 0h1v1h-1zm13 0h1v1h-1zm14 0h1v1h-1zm14 0h1v1h-1zm-887 14h1v1h-1zm13 0h1v1h-1zm14 0h1v1h-1zm14 0h1v1h-1zm13 0h1v1h-1zm14 0h1v1h-1zm14 0h1v1h-1zm13 0h1v1h-1zm14 0h1v1h-1zm13 0h1v1h-1zm14 0h1v1h-1zm14 0h1v1h-1zm13 0h1v1h-1zm14 0h1v1h-1zm14 0h1v1h-1zm13 0h1v1h-1zm14 0h1v1h-1zm14 0h1v1h-1zm13 0h1v1h-1zm14 0h1v1h-1zm14 0h1v1h-1zm13 0h1v1h-1zm14 0h1v1h-1zm13 0h1v1h-1zm14 0h1v1h-1zm14 0h1v1h-1zm13 0h1v1h-1zm14 0h1v1h-1zm14 0h1v1h-1zm13 0h1v1h-1zm14 0h1v1h-1zm14 0h1v1h-1zm13 0h1v1h-1zm14 0h1v1h-1zm14 0h1v1h-1zm13 0h1v1h-1zm14 0h1v1h-1zm14 0h1v1h-1zm13 0h1v1h-1zm14 0h1v1h-1zm13 0h1v1h-1zm14 0h1v1h-1zm14 0h1v1h-1zm13 0h1v1h-1zm14 0h1v1h-1zm14 0h1v1h-1zm13 0h1v1h-1zm14 0h1v1h-1zm14 0h1v1h-1zm13 0h1v1h-1zm14 0h1v1h-1zm14 0h1v1h-1zm13 0h1v1h-1zm14 0h1v1h-1zm14 0h1v1h-1zm13 0h1v1h-1zm14 0h1v1h-1zm13 0h1v1h-1zm14 0h1v1h-1zm14 0h1v1h-1zm13 0h1v1h-1zm14 0h1v1h-1zm14 0h1v1h-1zm13 0h1v1h-1zm14 0h1v1h-1zm14 0h1v1h-1zm13 0h1v1h-1zm-900 13h1v1h-1zm13 0h1v1h-1zm14 0h1v1h-1zm14 0h1v1h-1zm13 0h1v1h-1zm14 0h1v1h-1zm14 0h1v1h-1zm13 0h1v1h-1zm14 0h1v1h-1zm13 0h1v1h-1zm14 0h1v1h-1zm14 0h1v1h-1zm13 0h1v1h-1zm14 0h1v1h-1zm14 0h1v1h-1zm13 0h1v1h-1zm14 0h1v1h-1zm14 0h1v1h-1zm13 0h1v1h-1zm14 0h1v1h-1zm14 0h1v1h-1zm13 0h1v1h-1zm14 0h1v1h-1zm13 0h1v1h-1zm14 0h1v1h-1zm14 0h1v1h-1zm13 0h1v1h-1zm14 0h1v1h-1zm14 0h1v1h-1zm13 0h1v1h-1zm14 0h1v1h-1zm14 0h1v1h-1zm13 0h1v1h-1zm14 0h1v1h-1zm14 0h1v1h-1zm13 0h1v1h-1zm14 0h1v1h-1zm14 0h1v1h-1zm13 0h1v1h-1zm14 0h1v1h-1zm13 0h1v1h-1zm14 0h1v1h-1zm14 0h1v1h-1zm13 0h1v1h-1zm14 0h1v1h-1zm14 0h1v1h-1zm13 0h1v1h-1zm14 0h1v1h-1zm14 0h1v1h-1zm13 0h1v1h-1zm14 0h1v1h-1zm14 0h1v1h-1zm13 0h1v1h-1zm14 0h1v1h-1zm14 0h1v1h-1zm13 0h1v1h-1zm14 0h1v1h-1zm13 0h1v1h-1zm14 0h1v1h-1zm14 0h1v1h-1zm13 0h1v1h-1zm14 0h1v1h-1zm14 0h1v1h-1zm13 0h1v1h-1zm14 0h1v1h-1zm14 0h1v1h-1zm13 0h1v1h-1zm-900 14h1v1h-1zm13 0h1v1h-1zm14 0h1v1h-1zm14 0h1v1h-1zm13 0h1v1h-1zm14 0h1v1h-1zm14 0h1v1h-1zm13 0h1v1h-1zm14 0h1v1h-1zm13 0h1v1h-1zm14 0h1v1h-1zm14 0h1v1h-1zm13 0h1v1h-1zm14 0h1v1h-1zm14 0h1v1h-1zm13 0h1v1h-1zm14 0h1v1h-1zm14 0h1v1h-1zm13 0h1v1h-1zm14 0h1v1h-1zm14 0h1v1h-1zm13 0h1v1h-1zm14 0h1v1h-1zm13 0h1v1h-1zm14 0h1v1h-1zm14 0h1v1h-1zm13 0h1v1h-1zm14 0h1v1h-1zm14 0h1v1h-1zm13 0h1v1h-1zm14 0h1v1h-1zm14 0h1v1h-1zm13 0h1v1h-1zm14 0h1v1h-1zm14 0h1v1h-1zm13 0h1v1h-1zm14 0h1v1h-1zm14 0h1v1h-1zm13 0h1v1h-1zm14 0h1v1h-1zm13 0h1v1h-1zm14 0h1v1h-1zm14 0h1v1h-1zm13 0h1v1h-1zm14 0h1v1h-1zm14 0h1v1h-1zm13 0h1v1h-1zm14 0h1v1h-1zm14 0h1v1h-1zm13 0h1v1h-1zm14 0h1v1h-1zm14 0h1v1h-1zm13 0h1v1h-1zm14 0h1v1h-1zm14 0h1v1h-1zm13 0h1v1h-1zm14 0h1v1h-1zm13 0h1v1h-1zm14 0h1v1h-1zm14 0h1v1h-1zm13 0h1v1h-1zm14 0h1v1h-1zm14 0h1v1h-1zm13 0h1v1h-1zm14 0h1v1h-1zm14 0h1v1h-1zm13 0h1v1h-1zm-900 14h1v1h-1zm13 0h1v1h-1zm14 0h1v1h-1zm14 0h1v1h-1zm13 0h1v1h-1zm14 0h1v1h-1zm14 0h1v1h-1zm13 0h1v1h-1zm14 0h1v1h-1zm13 0h1v1h-1zm14 0h1v1h-1zm14 0h1v1h-1zm13 0h1v1h-1zm14 0h1v1h-1zm14 0h1v1h-1zm13 0h1v1h-1zm14 0h1v1h-1zm14 0h1v1h-1zm13 0h1v1h-1zm14 0h1v1h-1zm14 0h1v1h-1zm13 0h1v1h-1zm14 0h1v1h-1zm13 0h1v1h-1zm14 0h1v1h-1zm14 0h1v1h-1zm13 0h1v1h-1zm14 0h1v1h-1zm14 0h1v1h-1zm13 0h1v1h-1zm14 0h1v1h-1zm14 0h1v1h-1zm13 0h1v1h-1zm14 0h1v1h-1zm14 0h1v1h-1zm13 0h1v1h-1zm14 0h1v1h-1zm14 0h1v1h-1zm13 0h1v1h-1zm14 0h1v1h-1zm13 0h1v1h-1zm14 0h1v1h-1zm14 0h1v1h-1zm13 0h1v1h-1zm14 0h1v1h-1zm14 0h1v1h-1zm13 0h1v1h-1zm14 0h1v1h-1zm14 0h1v1h-1zm13 0h1v1h-1zm14 0h1v1h-1zm14 0h1v1h-1zm13 0h1v1h-1zm14 0h1v1h-1zm14 0h1v1h-1zm13 0h1v1h-1zm14 0h1v1h-1zm13 0h1v1h-1zm14 0h1v1h-1zm14 0h1v1h-1zm13 0h1v1h-1zm14 0h1v1h-1zm14 0h1v1h-1zm13 0h1v1h-1zm14 0h1v1h-1zm14 0h1v1h-1zm13 0h1v1h-1zm-900 13h1v1h-1zm27 0h1v1h-1zm14 0h1v1h-1zm13 0h1v1h-1zm14 0h1v1h-1zm27 0h1v1h-1zm14 0h1v1h-1zm13 0h1v1h-1zm14 0h1v1h-1zm27 0h1v1h-1zm14 0h1v1h-1zm14 0h1v1h-1zm13 0h1v1h-1zm28 0h1v1h-1zm13 0h1v1h-1zm14 0h1v1h-1zm14 0h1v1h-1zm27 0h1v1h-1zm13 0h1v1h-1zm14 0h1v1h-1zm14 0h1v1h-1zm27 0h1v1h-1zm14 0h1v1h-1zm13 0h1v1h-1zm14 0h1v1h-1zm27 0h1v1h-1zm14 0h1v1h-1zm14 0h1v1h-1zm13 0h1v1h-1zm28 0h1v1h-1zm13 0h1v1h-1zm14 0h1v1h-1zm13 0h1v1h-1zm28 0h1v1h-1zm13 0h1v1h-1zm14 0h1v1h-1zm14 0h1v1h-1zm27 0h1v1h-1zm14 0h1v1h-1zm13 0h1v1h-1zm14 0h1v1h-1zm27 0h1v1h-1zm14 0h1v1h-1zm14 0h1v1h-1zm13 0h1v1h-1zm27 0h1v1h-1zm14 0h1v1h-1zm14 0h1v1h-1zm13 0h1v1h-1zm28 0h1v1h-1zm13 0h1v1h-1zm14 0h1v1h-1zm14 0h1v1h-1zm-887 14h1v1h-1zm13 0h1v1h-1zm14 0h1v1h-1zm14 0h1v1h-1zm13 0h1v1h-1zm14 0h1v1h-1zm14 0h1v1h-1zm13 0h1v1h-1zm14 0h1v1h-1zm13 0h1v1h-1zm14 0h1v1h-1zm14 0h1v1h-1zm13 0h1v1h-1zm14 0h1v1h-1zm14 0h1v1h-1zm13 0h1v1h-1zm14 0h1v1h-1zm14 0h1v1h-1zm13 0h1v1h-1zm14 0h1v1h-1zm14 0h1v1h-1zm13 0h1v1h-1zm14 0h1v1h-1zm13 0h1v1h-1zm14 0h1v1h-1zm14 0h1v1h-1zm13 0h1v1h-1zm14 0h1v1h-1zm14 0h1v1h-1zm13 0h1v1h-1zm14 0h1v1h-1zm14 0h1v1h-1zm13 0h1v1h-1zm14 0h1v1h-1zm14 0h1v1h-1zm13 0h1v1h-1zm14 0h1v1h-1zm14 0h1v1h-1zm13 0h1v1h-1zm14 0h1v1h-1zm13 0h1v1h-1zm14 0h1v1h-1zm14 0h1v1h-1zm13 0h1v1h-1zm14 0h1v1h-1zm14 0h1v1h-1zm13 0h1v1h-1zm14 0h1v1h-1zm14 0h1v1h-1zm13 0h1v1h-1zm14 0h1v1h-1zm14 0h1v1h-1zm13 0h1v1h-1zm14 0h1v1h-1zm14 0h1v1h-1zm13 0h1v1h-1zm14 0h1v1h-1zm13 0h1v1h-1zm14 0h1v1h-1zm14 0h1v1h-1zm13 0h1v1h-1zm14 0h1v1h-1zm14 0h1v1h-1zm13 0h1v1h-1zm14 0h1v1h-1zm14 0h1v1h-1zm13 0h1v1h-1zm-900 14h1v1h-1zm13 0h1v1h-1zm14 0h1v1h-1zm14 0h1v1h-1zm13 0h1v1h-1zm14 0h1v1h-1zm14 0h1v1h-1zm13 0h1v1h-1zm14 0h1v1h-1zm13 0h1v1h-1zm14 0h1v1h-1zm14 0h1v1h-1zm13 0h1v1h-1zm14 0h1v1h-1zm14 0h1v1h-1zm13 0h1v1h-1zm14 0h1v1h-1zm14 0h1v1h-1zm13 0h1v1h-1zm14 0h1v1h-1zm14 0h1v1h-1zm13 0h1v1h-1zm14 0h1v1h-1zm13 0h1v1h-1zm14 0h1v1h-1zm14 0h1v1h-1zm13 0h1v1h-1zm14 0h1v1h-1zm14 0h1v1h-1zm13 0h1v1h-1zm14 0h1v1h-1zm14 0h1v1h-1zm13 0h1v1h-1zm14 0h1v1h-1zm14 0h1v1h-1zm13 0h1v1h-1zm14 0h1v1h-1zm14 0h1v1h-1zm13 0h1v1h-1zm14 0h1v1h-1zm13 0h1v1h-1zm14 0h1v1h-1zm14 0h1v1h-1zm13 0h1v1h-1zm14 0h1v1h-1zm14 0h1v1h-1zm13 0h1v1h-1zm14 0h1v1h-1zm14 0h1v1h-1zm13 0h1v1h-1zm14 0h1v1h-1zm14 0h1v1h-1zm13 0h1v1h-1zm14 0h1v1h-1zm14 0h1v1h-1zm13 0h1v1h-1zm14 0h1v1h-1zm13 0h1v1h-1zm14 0h1v1h-1zm14 0h1v1h-1zm13 0h1v1h-1zm14 0h1v1h-1zm14 0h1v1h-1zm13 0h1v1h-1zm14 0h1v1h-1zm14 0h1v1h-1zm13 0h1v1h-1zm-900 13h1v1h-1zm13 0h1v1h-1zm14 0h1v1h-1zm14 0h1v1h-1zm13 0h1v1h-1zm14 0h1v1h-1zm14 0h1v1h-1zm13 0h1v1h-1zm14 0h1v1h-1zm13 0h1v1h-1zm14 0h1v1h-1zm14 0h1v1h-1zm13 0h1v1h-1zm14 0h1v1h-1zm14 0h1v1h-1zm13 0h1v1h-1zm14 0h1v1h-1zm14 0h1v1h-1zm13 0h1v1h-1zm14 0h1v1h-1zm14 0h1v1h-1zm13 0h1v1h-1zm14 0h1v1h-1zm13 0h1v1h-1zm14 0h1v1h-1zm14 0h1v1h-1zm13 0h1v1h-1zm14 0h1v1h-1zm14 0h1v1h-1zm13 0h1v1h-1zm14 0h1v1h-1zm14 0h1v1h-1zm13 0h1v1h-1zm14 0h1v1h-1zm14 0h1v1h-1zm13 0h1v1h-1zm14 0h1v1h-1zm14 0h1v1h-1zm13 0h1v1h-1zm14 0h1v1h-1zm13 0h1v1h-1zm14 0h1v1h-1zm14 0h1v1h-1zm13 0h1v1h-1zm14 0h1v1h-1zm14 0h1v1h-1zm13 0h1v1h-1zm14 0h1v1h-1zm14 0h1v1h-1zm13 0h1v1h-1zm14 0h1v1h-1zm14 0h1v1h-1zm13 0h1v1h-1zm14 0h1v1h-1zm14 0h1v1h-1zm13 0h1v1h-1zm14 0h1v1h-1zm13 0h1v1h-1zm14 0h1v1h-1zm14 0h1v1h-1zm13 0h1v1h-1zm14 0h1v1h-1zm14 0h1v1h-1zm13 0h1v1h-1zm14 0h1v1h-1zm14 0h1v1h-1zm13 0h1v1h-1zm-900 14h1v1h-1zm13 0h1v1h-1zm14 0h1v1h-1zm14 0h1v1h-1zm13 0h1v1h-1zm14 0h1v1h-1zm14 0h1v1h-1zm13 0h1v1h-1zm14 0h1v1h-1zm13 0h1v1h-1zm14 0h1v1h-1zm14 0h1v1h-1zm13 0h1v1h-1zm14 0h1v1h-1zm14 0h1v1h-1zm13 0h1v1h-1zm14 0h1v1h-1zm14 0h1v1h-1zm13 0h1v1h-1zm14 0h1v1h-1zm14 0h1v1h-1zm13 0h1v1h-1zm14 0h1v1h-1zm13 0h1v1h-1zm14 0h1v1h-1zm14 0h1v1h-1zm13 0h1v1h-1zm14 0h1v1h-1zm14 0h1v1h-1zm13 0h1v1h-1zm14 0h1v1h-1zm14 0h1v1h-1zm13 0h1v1h-1zm14 0h1v1h-1zm14 0h1v1h-1zm13 0h1v1h-1zm14 0h1v1h-1zm14 0h1v1h-1zm13 0h1v1h-1zm14 0h1v1h-1zm13 0h1v1h-1zm14 0h1v1h-1zm14 0h1v1h-1zm13 0h1v1h-1zm14 0h1v1h-1zm14 0h1v1h-1zm13 0h1v1h-1zm14 0h1v1h-1zm14 0h1v1h-1zm13 0h1v1h-1zm14 0h1v1h-1zm14 0h1v1h-1zm13 0h1v1h-1zm14 0h1v1h-1zm14 0h1v1h-1zm13 0h1v1h-1zm14 0h1v1h-1zm13 0h1v1h-1zm14 0h1v1h-1zm14 0h1v1h-1zm13 0h1v1h-1zm14 0h1v1h-1zm14 0h1v1h-1zm13 0h1v1h-1zm14 0h1v1h-1zm14 0h1v1h-1zm13 0h1v1h-1zm-900 14h1v1h-1zm27 0h1v1h-1zm14 0h1v1h-1zm13 0h1v1h-1zm14 0h1v1h-1zm27 0h1v1h-1zm14 0h1v1h-1zm13 0h1v1h-1zm14 0h1v1h-1zm27 0h1v1h-1zm14 0h1v1h-1zm14 0h1v1h-1zm13 0h1v1h-1zm28 0h1v1h-1zm13 0h1v1h-1zm14 0h1v1h-1zm14 0h1v1h-1zm27 0h1v1h-1zm13 0h1v1h-1zm14 0h1v1h-1zm14 0h1v1h-1zm27 0h1v1h-1zm14 0h1v1h-1zm13 0h1v1h-1zm14 0h1v1h-1zm27 0h1v1h-1zm14 0h1v1h-1zm14 0h1v1h-1zm13 0h1v1h-1zm28 0h1v1h-1zm13 0h1v1h-1zm14 0h1v1h-1zm13 0h1v1h-1zm28 0h1v1h-1zm13 0h1v1h-1zm14 0h1v1h-1zm14 0h1v1h-1zm27 0h1v1h-1zm14 0h1v1h-1zm13 0h1v1h-1zm14 0h1v1h-1zm27 0h1v1h-1zm14 0h1v1h-1zm14 0h1v1h-1zm13 0h1v1h-1zm27 0h1v1h-1zm14 0h1v1h-1zm14 0h1v1h-1zm13 0h1v1h-1zm28 0h1v1h-1zm13 0h1v1h-1zm14 0h1v1h-1zm14 0h1v1h-1zm-887 13h1v1h-1zm13 0h1v1h-1zm14 0h1v1h-1zm14 0h1v1h-1zm13 0h1v1h-1zm14 0h1v1h-1zm14 0h1v1h-1zm13 0h1v1h-1zm14 0h1v1h-1zm13 0h1v1h-1zm14 0h1v1h-1zm14 0h1v1h-1zm13 0h1v1h-1zm14 0h1v1h-1zm14 0h1v1h-1zm13 0h1v1h-1zm14 0h1v1h-1zm14 0h1v1h-1zm13 0h1v1h-1zm14 0h1v1h-1zm14 0h1v1h-1zm13 0h1v1h-1zm14 0h1v1h-1zm13 0h1v1h-1zm14 0h1v1h-1zm14 0h1v1h-1zm13 0h1v1h-1zm14 0h1v1h-1zm14 0h1v1h-1zm13 0h1v1h-1zm14 0h1v1h-1zm14 0h1v1h-1zm13 0h1v1h-1zm14 0h1v1h-1zm14 0h1v1h-1zm13 0h1v1h-1zm14 0h1v1h-1zm14 0h1v1h-1zm13 0h1v1h-1zm14 0h1v1h-1zm13 0h1v1h-1zm14 0h1v1h-1zm14 0h1v1h-1zm13 0h1v1h-1zm14 0h1v1h-1zm14 0h1v1h-1zm13 0h1v1h-1zm14 0h1v1h-1zm14 0h1v1h-1zm13 0h1v1h-1zm14 0h1v1h-1zm14 0h1v1h-1zm13 0h1v1h-1zm14 0h1v1h-1zm14 0h1v1h-1zm13 0h1v1h-1zm14 0h1v1h-1zm13 0h1v1h-1zm14 0h1v1h-1zm14 0h1v1h-1zm13 0h1v1h-1zm14 0h1v1h-1zm14 0h1v1h-1zm13 0h1v1h-1zm14 0h1v1h-1zm14 0h1v1h-1zm13 0h1v1h-1zm-900 14h1v1h-1zm13 0h1v1h-1zm14 0h1v1h-1zm14 0h1v1h-1zm13 0h1v1h-1zm14 0h1v1h-1zm14 0h1v1h-1zm13 0h1v1h-1zm14 0h1v1h-1zm13 0h1v1h-1zm14 0h1v1h-1zm14 0h1v1h-1zm13 0h1v1h-1zm14 0h1v1h-1zm14 0h1v1h-1zm13 0h1v1h-1zm14 0h1v1h-1zm14 0h1v1h-1zm13 0h1v1h-1zm14 0h1v1h-1zm14 0h1v1h-1zm13 0h1v1h-1zm14 0h1v1h-1zm13 0h1v1h-1zm14 0h1v1h-1zm14 0h1v1h-1zm13 0h1v1h-1zm14 0h1v1h-1zm14 0h1v1h-1zm13 0h1v1h-1zm14 0h1v1h-1zm14 0h1v1h-1zm13 0h1v1h-1zm14 0h1v1h-1zm14 0h1v1h-1zm13 0h1v1h-1zm14 0h1v1h-1zm14 0h1v1h-1zm13 0h1v1h-1zm14 0h1v1h-1zm13 0h1v1h-1zm14 0h1v1h-1zm14 0h1v1h-1zm13 0h1v1h-1zm14 0h1v1h-1zm14 0h1v1h-1zm13 0h1v1h-1zm14 0h1v1h-1zm14 0h1v1h-1zm13 0h1v1h-1zm14 0h1v1h-1zm14 0h1v1h-1zm13 0h1v1h-1zm14 0h1v1h-1zm14 0h1v1h-1zm13 0h1v1h-1zm14 0h1v1h-1zm13 0h1v1h-1zm14 0h1v1h-1zm14 0h1v1h-1zm13 0h1v1h-1zm14 0h1v1h-1zm14 0h1v1h-1zm13 0h1v1h-1zm14 0h1v1h-1zm14 0h1v1h-1zm13 0h1v1h-1zm-900 13h1v1h-1zm13 0h1v1h-1zm14 0h1v1h-1zm14 0h1v1h-1zm13 0h1v1h-1zm14 0h1v1h-1zm14 0h1v1h-1zm13 0h1v1h-1zm14 0h1v1h-1zm13 0h1v1h-1zm14 0h1v1h-1zm14 0h1v1h-1zm13 0h1v1h-1zm14 0h1v1h-1zm14 0h1v1h-1zm13 0h1v1h-1zm14 0h1v1h-1zm14 0h1v1h-1zm13 0h1v1h-1zm14 0h1v1h-1zm14 0h1v1h-1zm13 0h1v1h-1zm14 0h1v1h-1zm13 0h1v1h-1zm14 0h1v1h-1zm14 0h1v1h-1zm13 0h1v1h-1zm14 0h1v1h-1zm14 0h1v1h-1zm13 0h1v1h-1zm14 0h1v1h-1zm14 0h1v1h-1zm13 0h1v1h-1zm14 0h1v1h-1zm14 0h1v1h-1zm13 0h1v1h-1zm14 0h1v1h-1zm14 0h1v1h-1zm13 0h1v1h-1zm14 0h1v1h-1zm13 0h1v1h-1zm14 0h1v1h-1zm14 0h1v1h-1zm13 0h1v1h-1zm14 0h1v1h-1zm14 0h1v1h-1zm13 0h1v1h-1zm14 0h1v1h-1zm14 0h1v1h-1zm13 0h1v1h-1zm14 0h1v1h-1zm14 0h1v1h-1zm13 0h1v1h-1zm14 0h1v1h-1zm14 0h1v1h-1zm13 0h1v1h-1zm14 0h1v1h-1zm13 0h1v1h-1zm14 0h1v1h-1zm14 0h1v1h-1zm13 0h1v1h-1zm14 0h1v1h-1zm14 0h1v1h-1zm13 0h1v1h-1zm14 0h1v1h-1zm14 0h1v1h-1zm13 0h1v1h-1zm-900 14h1v1h-1zm13 0h1v1h-1zm14 0h1v1h-1zm14 0h1v1h-1zm13 0h1v1h-1zm14 0h1v1h-1zm14 0h1v1h-1zm13 0h1v1h-1zm14 0h1v1h-1zm13 0h1v1h-1zm14 0h1v1h-1zm14 0h1v1h-1zm13 0h1v1h-1zm14 0h1v1h-1zm14 0h1v1h-1zm13 0h1v1h-1zm14 0h1v1h-1zm14 0h1v1h-1zm13 0h1v1h-1zm14 0h1v1h-1zm14 0h1v1h-1zm13 0h1v1h-1zm14 0h1v1h-1zm13 0h1v1h-1zm14 0h1v1h-1zm14 0h1v1h-1zm13 0h1v1h-1zm14 0h1v1h-1zm14 0h1v1h-1zm13 0h1v1h-1zm14 0h1v1h-1zm14 0h1v1h-1zm13 0h1v1h-1zm14 0h1v1h-1zm14 0h1v1h-1zm13 0h1v1h-1zm14 0h1v1h-1zm14 0h1v1h-1zm13 0h1v1h-1zm14 0h1v1h-1zm13 0h1v1h-1zm14 0h1v1h-1zm14 0h1v1h-1zm13 0h1v1h-1zm14 0h1v1h-1zm14 0h1v1h-1zm13 0h1v1h-1zm14 0h1v1h-1zm14 0h1v1h-1zm13 0h1v1h-1zm14 0h1v1h-1zm14 0h1v1h-1zm13 0h1v1h-1zm14 0h1v1h-1zm14 0h1v1h-1zm13 0h1v1h-1zm14 0h1v1h-1zm13 0h1v1h-1zm14 0h1v1h-1zm14 0h1v1h-1zm13 0h1v1h-1zm14 0h1v1h-1zm14 0h1v1h-1zm13 0h1v1h-1zm14 0h1v1h-1zm14 0h1v1h-1zm13 0h1v1h-1z"/>
<clipPath id="pillclip"><rect x="1095" y="496.7" width="200" height="67" rx="33.5"/></clipPath><linearGradient id="ysh" x1="0" y1="0" x2="0" y2="1"><stop offset="0" stop-color="#f6e6a8"/><stop offset="1" stop-color="#eed27a"/></linearGradient></defs></svg>
<svg class="a" style="left:205px;top:70px" width="70" height="24" viewBox="205 70 70 24">
 <path d="M209 77 H223 L216 89 Z" fill="#fff"/>
 <path d="M233.8 72.8 H244.2 V82.7 H245.2 V85.2 H240.5 V90 H237.5 V85.2 H232.8 V82.7 H233.8 Z M236 75 V82.7 H238.2 V75 Z" fill="#fff" fill-rule="evenodd"/>
 <path d="M258 77 L270.5 89.5 M270.5 77 L258 89.5" stroke="#fff" stroke-width="3.2"/>
</svg>
<svg class="a" style="left:8px;top:112px" width="150" height="46" viewBox="8 112 150 46">
 <g stroke="#b2945a" stroke-width="1.2" stroke-linejoin="round">
  <path d="M13.5 143.5 V122 H22 L24 125.8 H38.8 V143.5 Z" fill="#e8c87c"/>
  <path d="M63.5 143.5 V122 H72 L74 125.8 H88.8 V143.5 Z" fill="#e8c87c"/>
 </g>
 <path d="M14.6 126 H38 M15 127 V143" stroke="#fbefcc" stroke-width="1.4"/>
 <path d="M64.6 126 H88 M65 127 V143" stroke="#fbefcc" stroke-width="1.4"/>
 <line x1="31" y1="143.5" x2="25.5" y2="150" stroke="#b2945a" stroke-width="4" stroke-linecap="round"/>
 <line x1="31" y1="143.5" x2="25.5" y2="150" stroke="#e8c87c" stroke-width="2" stroke-linecap="round"/>
 <circle cx="37.3" cy="137.9" r="6.6" fill="#d4e0ea" stroke="#6d8088" stroke-width="1.6"/>
 <circle cx="83.8" cy="142.5" r="9.8" fill="none" stroke="#7e8a90" stroke-width="2.6" stroke-dasharray="2.6 2.53"/>
 <circle cx="83.8" cy="142.5" r="8.7" fill="#a2acb2" stroke="#6e7a80" stroke-width="0.8"/>
 <circle cx="83.8" cy="142.5" r="5.6" fill="none" stroke="#c4ccd0" stroke-width="1.4"/><circle cx="83.8" cy="142.5" r="3.4" fill="#e8c87c" stroke="#6e7a80" stroke-width="0.8"/>
 <line x1="106.5" y1="122" x2="106.5" y2="154" stroke="#222" stroke-width="1.2"/>
 <circle cx="134" cy="137.9" r="12.6" fill="none" stroke="#9aa4a9" stroke-width="3.4" stroke-dasharray="3.6 3"/>
 <circle cx="134" cy="137.9" r="11" fill="#a8b2b7"/>
 <circle cx="134" cy="137.9" r="7.5" fill="none" stroke="#c6ced2" stroke-width="2"/>
 <circle cx="134" cy="137.9" r="4.2" fill="#3c3c3c"/>
</svg>
<div class="a" style="left:0;top:165px;width:268px;height:1px;background:#2c2c2c"></div>
<div class="a" style="left:267px;top:165px;width:1px;height:30px;background:#2c2c2c"></div>
<div class="a" style="left:5px;top:179px;width:1px;height:6px;background:#ddd"></div>
<div class="a" style="left:-10px;top:172px;width:268px;height:20px;background:#2c2c2c;border-radius:5px"></div>
<div class="a" style="left:240px;top:573px;width:12px;height:11px;background:#888;border-radius:0 0 5px 5px"></div>
<div class="a" style="left:0px;top:581px;width:232px;height:1px;background:#474747"></div>
<div class="a" style="left:0px;top:613px;width:232px;height:1px;background:#474747"></div>
<div class="a" style="left:0px;top:645px;width:232px;height:1px;background:#474747"></div>
<div class="a" style="left:17px;top:677px;width:215px;height:1px;background:#474747"></div>
<div class="a" style="left:35px;top:709px;width:197px;height:1px;background:#474747"></div>
<div class="a" style="left:35px;top:741px;width:197px;height:1px;background:#474747"></div>
<div class="a" style="left:35px;top:773px;width:197px;height:1px;background:#474747"></div>
<div class="a" style="left:17px;top:805px;width:215px;height:1px;background:#474747"></div>
<div class="a" style="left:0;top:581px;width:178px;height:256px;overflow:hidden">
<div class="tr" style="left:-32px;top:4px;font-weight:bold;font-size:16.3px">Bluetooth_Sentinel.PrjPcb</div>
<div class="tr" style="left:-10px;top:36px;font-weight:normal">Source Documents</div>
<div class="tr" style="left:3px;top:68px;font-weight:normal">Bluetooth_Sentinel.SchDoc</div>
<div class="tr" style="left:21px;top:100px;font-weight:normal">Host_Controller.SchDoc</div>
<div class="tr" style="left:39px;top:132px;font-weight:normal">Microcontroller_STM32.SchDoc</div>
<div class="tr" style="left:39px;top:164px;font-weight:normal">Debug_JTAG.SchDoc</div>
<div class="tr" style="left:39px;top:196px;font-weight:normal">Oscillator_32_768KHz.SchDoc</div>
<div class="tr" style="left:21px;top:228px;font-weight:normal">Bluetooth.SchDoc</div>
</div>
<div class="a" style="left:177px;top:589px;width:1px;height:3px;background:#bbb"></div>
<svg class="a" style="left:183px;top:587px" width="17" height="21" viewBox="0 0 17 21"><path d="M1 1 H10 L16 7 V20 H1 Z" fill="none" stroke="#f07474" stroke-width="2"/><path d="M10 1 V7 H16" fill="none" stroke="#f07474" stroke-width="1"/></svg>
<svg class="a" style="left:-14px;top:678px" width="31" height="23" viewBox="0 0 31 23"><rect x="0.5" y="0.5" width="30" height="22" fill="url(#ysh)" stroke="#9c8650" stroke-width="1.1"/><path d="M1.6 21.5 V1.6 H29.5" fill="none" stroke="#fff6d0" stroke-width="1.1"/><path d="M15.9 22.5 V11.4 H30.5" fill="none" stroke="#8c7a4c" stroke-width="1.1"/><path d="M15.9 16.5 H30.5" stroke="#8c7a4c" stroke-width="1.1"/><path d="M17.0 15.7 V12.5 H29.5 M17.0 21.5 V17.6 H29.5" fill="none" stroke="#fff6d0" stroke-width="1"/></svg><svg class="a" style="left:4px;top:713px" width="31" height="23" viewBox="0 0 31 23"><rect x="0.5" y="0.5" width="30" height="22" fill="url(#ysh)" stroke="#9c8650" stroke-width="1.1"/><path d="M1.6 21.5 V1.6 H29.5" fill="none" stroke="#fff6d0" stroke-width="1.1"/><path d="M15.9 22.5 V11.4 H30.5" fill="none" stroke="#8c7a4c" stroke-width="1.1"/><path d="M15.9 16.5 H30.5" stroke="#8c7a4c" stroke-width="1.1"/><path d="M17.0 15.7 V12.5 H29.5 M17.0 21.5 V17.6 H29.5" fill="none" stroke="#fff6d0" stroke-width="1"/></svg><svg class="a" style="left:3px;top:742px" width="32" height="29" viewBox="0 0 32 29"><path d="M7.5 9 L13.5 2 H16" fill="none" stroke="#4a8a6c" stroke-width="3.4" stroke-linejoin="round"/><path d="M15 2 H21 L24.5 6" fill="none" stroke="#8ee0a8" stroke-width="3.4" stroke-linejoin="round"/><path d="M18.5 6 H30 L24.2 12 Z" fill="#8ee0a8"/><path d="M1.2 12.5 L6.8 5.5 L11.5 12 Z" fill="#8ee0a8"/><path d="M5.5 11 L2.5 19.5" fill="none" stroke="#8ee0a8" stroke-width="3.4"/><path d="M2.5 20.5 H15" fill="none" stroke="#4a8a6c" stroke-width="3.4"/><rect x="14.5" y="14.5" width="16.5" height="14" fill="url(#ysh)" stroke="#b0924a"/><path d="M23 29 V21 H31 M23 25 H31" fill="none" stroke="#b0924a"/></svg><svg class="a" style="left:3px;top:774px" width="32" height="29" viewBox="0 0 32 29"><path d="M7.5 9 L13.5 2 H16" fill="none" stroke="#4a8a6c" stroke-width="3.4" stroke-linejoin="round"/><path d="M15 2 H21 L24.5 6" fill="none" stroke="#8ee0a8" stroke-width="3.4" stroke-linejoin="round"/><path d="M18.5 6 H30 L24.2 12 Z" fill="#8ee0a8"/><path d="M1.2 12.5 L6.8 5.5 L11.5 12 Z" fill="#8ee0a8"/><path d="M5.5 11 L2.5 19.5" fill="none" stroke="#8ee0a8" stroke-width="3.4"/><path d="M2.5 20.5 H15" fill="none" stroke="#4a8a6c" stroke-width="3.4"/><rect x="14.5" y="14.5" width="16.5" height="14" fill="url(#ysh)" stroke="#b0924a"/><path d="M23 29 V21 H31 M23 25 H31" fill="none" stroke="#b0924a"/></svg><svg class="a" style="left:-14px;top:809px" width="31" height="23" viewBox="0 0 31 23"><rect x="0.5" y="0.5" width="30" height="22" fill="url(#ysh)" stroke="#9c8650" stroke-width="1.1"/><path d="M1.6 21.5 V1.6 H29.5" fill="none" stroke="#fff6d0" stroke-width="1.1"/><path d="M15.9 22.5 V11.4 H30.5" fill="none" stroke="#8c7a4c" stroke-width="1.1"/><path d="M15.9 16.5 H30.5" stroke="#8c7a4c" stroke-width="1.1"/><path d="M17.0 15.7 V12.5 H29.5 M17.0 21.5 V17.6 H29.5" fill="none" stroke="#fff6d0" stroke-width="1"/></svg>
<div id="canvas" class="a"></div>
<svg class="a" style="left:286px;top:103px" width="923" height="734" viewBox="286 103 923 734">
<defs>
<pattern id="grid" patternUnits="userSpaceOnUse" x="609.1" y="194.8" width="13.67" height="13.67"><rect x="0" y="0" width="1" height="1" fill="#4e4e5a" shape-rendering="crispEdges"/></pattern>
<pattern id="gridb" patternUnits="userSpaceOnUse" x="649.9" y="222.8" width="68.35" height="68.35"><rect x="0" y="0" width="1" height="1" fill="#bcbcbc" shape-rendering="crispEdges"/></pattern>
<pattern id="hatch" patternUnits="userSpaceOnUse" x="6.8" y="0" width="8" height="8"><path d="M-1,-1 L9,9" stroke="#ff00ff" stroke-width="1" shape-rendering="crispEdges"/></pattern>
<g id="comp">
  <rect x="593.5" y="62.3" width="419" height="375.7" rx="1" fill="none" stroke="#008000" stroke-width="9.6" stroke-linejoin="round"/>
  <rect x="727.8" y="89.4" width="150.2" height="320.6" fill="none" stroke="#ff00ff" stroke-width="9.8" stroke-linejoin="round"/>
  <path d="M781.5 89 H878.3 V174.7" stroke="#ffff00" stroke-width="20.5" stroke-linecap="round" stroke-linejoin="round" fill="none"/>
  <path d="M782 411 H878.2 V326" stroke="#ffff00" stroke-width="20" stroke-linecap="round" stroke-linejoin="round" fill="none"/>
  <circle cx="682.2" cy="56.8" r="26.5" fill="#ffff00"/><rect x="681" y="56.5" width="3" height="1" fill="#8a8a20"/>
  <rect x="610" y="105.7" width="144" height="85.3" fill="#800080"/>
  <rect x="620.7" y="116.3" width="122.8" height="64" fill="#ff0000"/>
  <rect x="610" y="309.7" width="144.2" height="85.3" fill="#800080"/>
  <rect x="620.5" y="320.5" width="123.2" height="63.5" fill="#ff0000"/>
  <rect x="852" y="207.7" width="143.8" height="85.1" fill="#800080"/>
  <rect x="862.3" y="218.5" width="123.1" height="63.5" fill="#ff0000"/>
  <path d="M749 249.7 H856.5 M802.8 196 V302" stroke="#008000" stroke-width="9" stroke-linecap="round" fill="none"/>
  <g fill="none" stroke="#ffb8b8" stroke-linecap="round" stroke-linejoin="round">
    <path d="M677.8 145.3 L684.1 138.3 V162.3" stroke-width="2.6"/>
    <path d="M676.8 347.8 Q677 342.4 682.2 342.3 Q687.8 342.4 687.8 348.2 Q687.8 351.5 684.5 355.6 L676.7 365.2 H689" stroke-width="2.6"/>
    <path d="M920.6 237.6 Q921.4 234.8 924 234.8 Q927 234.8 927 238 Q927 241.1 923.8 241.2 Q927.5 241.4 927.5 245 Q927.5 248.3 923.9 248.3 Q921 248.3 920.3 245.6" stroke-width="1.7"/>
    <path d="M920 254.9 V268.2 H925.3 Q928.2 268.2 928.2 264.7 Q928.2 261.4 925 261.3 H920 M925 261.3 Q927.1 261 927.1 258 Q927.1 254.9 924.4 254.9 H920" stroke-width="1.7"/>
  </g>
</g>
</defs>
<rect x="286" y="103" width="923" height="734" fill="#000"/>
<use href="#dots" fill="#4e4e5c"/>
<path fill="#b8b8c0" d="M309 154h1v1h-1zm69 0h1v1h-1zm68 0h1v1h-1zm68 0h1v1h-1zm68 0h1v1h-1zm68 0h1v1h-1zm69 0h1v1h-1zm68 0h1v1h-1zm68 0h1v1h-1zm68 0h1v1h-1zm69 0h1v1h-1zm68 0h1v1h-1zm68 0h1v1h-1zm68 0h1v1h-1zm-887 69h1v1h-1zm69 0h1v1h-1zm68 0h1v1h-1zm68 0h1v1h-1zm68 0h1v1h-1zm68 0h1v1h-1zm69 0h1v1h-1zm68 0h1v1h-1zm68 0h1v1h-1zm68 0h1v1h-1zm69 0h1v1h-1zm68 0h1v1h-1zm68 0h1v1h-1zm68 0h1v1h-1zm-887 68h1v1h-1zm69 0h1v1h-1zm68 0h1v1h-1zm68 0h1v1h-1zm68 0h1v1h-1zm68 0h1v1h-1zm69 0h1v1h-1zm68 0h1v1h-1zm68 0h1v1h-1zm68 0h1v1h-1zm69 0h1v1h-1zm68 0h1v1h-1zm68 0h1v1h-1zm68 0h1v1h-1zm-887 68h1v1h-1zm69 0h1v1h-1zm68 0h1v1h-1zm68 0h1v1h-1zm68 0h1v1h-1zm68 0h1v1h-1zm69 0h1v1h-1zm68 0h1v1h-1zm68 0h1v1h-1zm68 0h1v1h-1zm69 0h1v1h-1zm68 0h1v1h-1zm68 0h1v1h-1zm68 0h1v1h-1zm-887 68h1v1h-1zm69 0h1v1h-1zm68 0h1v1h-1zm68 0h1v1h-1zm68 0h1v1h-1zm68 0h1v1h-1zm69 0h1v1h-1zm68 0h1v1h-1zm68 0h1v1h-1zm68 0h1v1h-1zm69 0h1v1h-1zm68 0h1v1h-1zm68 0h1v1h-1zm68 0h1v1h-1zm-887 69h1v1h-1zm69 0h1v1h-1zm68 0h1v1h-1zm68 0h1v1h-1zm68 0h1v1h-1zm68 0h1v1h-1zm69 0h1v1h-1zm68 0h1v1h-1zm68 0h1v1h-1zm68 0h1v1h-1zm69 0h1v1h-1zm68 0h1v1h-1zm68 0h1v1h-1zm68 0h1v1h-1zm-887 68h1v1h-1zm69 0h1v1h-1zm68 0h1v1h-1zm68 0h1v1h-1zm68 0h1v1h-1zm68 0h1v1h-1zm69 0h1v1h-1zm68 0h1v1h-1zm68 0h1v1h-1zm68 0h1v1h-1zm69 0h1v1h-1zm68 0h1v1h-1zm68 0h1v1h-1zm68 0h1v1h-1zm-887 68h1v1h-1zm69 0h1v1h-1zm68 0h1v1h-1zm68 0h1v1h-1zm68 0h1v1h-1zm68 0h1v1h-1zm69 0h1v1h-1zm68 0h1v1h-1zm68 0h1v1h-1zm68 0h1v1h-1zm69 0h1v1h-1zm68 0h1v1h-1zm68 0h1v1h-1zm68 0h1v1h-1zm-887 68h1v1h-1zm69 0h1v1h-1zm68 0h1v1h-1zm68 0h1v1h-1zm68 0h1v1h-1zm68 0h1v1h-1zm69 0h1v1h-1zm68 0h1v1h-1zm68 0h1v1h-1zm68 0h1v1h-1zm69 0h1v1h-1zm68 0h1v1h-1zm68 0h1v1h-1zm68 0h1v1h-1zm-887 69h1v1h-1zm69 0h1v1h-1zm68 0h1v1h-1zm68 0h1v1h-1zm68 0h1v1h-1zm68 0h1v1h-1zm69 0h1v1h-1zm68 0h1v1h-1zm68 0h1v1h-1zm68 0h1v1h-1zm69 0h1v1h-1zm68 0h1v1h-1zm68 0h1v1h-1zm68 0h1v1h-1z"/>
<rect x="732" y="94" width="142" height="312" fill="url(#hatch)"/>
<rect x="728" y="714.7" width="142" height="312" fill="url(#hatch)"/>
<use href="#comp"/>
<use href="#comp" transform="translate(-4 620.7)"/>
<rect x="981" y="282" width="1.6" height="555" fill="#50f0b4"/>
<rect x="1095" y="496.7" width="200" height="67" rx="33.5" fill="#6b6766"/>
<g clip-path="url(#pillclip)"><use href="#dots" fill="#4a4a64"/></g>
<rect x="1095" y="496.7" width="200" height="67" rx="33.5" fill="none" stroke="#e0e0e0" stroke-width="1.8" stroke-dasharray="9.5 8.5" stroke-dashoffset="4"/>
<rect x="942" y="553" width="79" height="15" fill="#ffff00"/>
<text x="946.5" y="567" font-family="Liberation Sans" font-size="11" fill="#222" textLength="70" lengthAdjust="spacingAndGlyphs">XY : 203.78mil</text>
</svg>

<div class="a" style="left:286px;top:103px;width:297px;height:97px;background:linear-gradient(180deg,rgba(0,0,0,0.95) 0%,rgba(8,26,40,0.85) 45%,rgba(26,74,104,0.88) 100%)"></div>
<svg class="a" style="left:286px;top:103px" width="297" height="97" viewBox="286 103 297 97"><g font-family="Liberation Sans" font-weight="bold" fill="#e8e2b4" font-size="21"><text x="293.9" y="127.1" textLength="18.9" lengthAdjust="spacingAndGlyphs">x:</text><text x="323.6" y="127.1" textLength="84.7" lengthAdjust="spacingAndGlyphs">2945.000</text><text x="422.9" y="127.1" textLength="30.4" lengthAdjust="spacingAndGlyphs">dx:</text><text x="470.5" y="127.1" textLength="69.8" lengthAdjust="spacingAndGlyphs">-80.000</text><text x="547.9" y="127.1" textLength="29.6" lengthAdjust="spacingAndGlyphs">mil</text><text x="293.9" y="149.1" textLength="18.9" lengthAdjust="spacingAndGlyphs">y:</text><text x="323.6" y="149.1" textLength="84.7" lengthAdjust="spacingAndGlyphs">3745.000</text><text x="422.9" y="149.1" textLength="30.4" lengthAdjust="spacingAndGlyphs">dy:</text><text x="470.9" y="149.1" textLength="73.7" lengthAdjust="spacingAndGlyphs">160.000</text><text x="547.9" y="149.1" textLength="29.6" lengthAdjust="spacingAndGlyphs">mil</text></g><text x="296" y="174.8" font-family="Liberation Sans" font-weight="bold" font-size="23.9" fill="#ffff00">Mechanical 15</text><text x="294" y="192" font-family="Liberation Sans" font-size="17.2" fill="#e8e2b4">Snap: 5mil Hotspot Snap: 8mil</text></svg>

<div class="a" style="left:666px;top:108px;width:560px;height:50px;background:#3e3e3e;border-radius:9px"></div>
<svg class="a" style="left:666px;top:108px" width="543" height="50" viewBox="666 108 543 50">
 <g fill="#d0d0d0">
  <path d="M818 147 V155 H810 Z"/><path d="M868 147 V155 H860 Z"/><path d="M918 147 V155 H910 Z"/><path d="M970 147 V155 H962 Z"/><path d="M1020 147 V155 H1012 Z"/><path d="M1070 147 V155 H1062 Z"/><path d="M1120 147 V155 H1112 Z"/><path d="M1170 147 V155 H1162 Z"/>
 </g>
 <path d="M682.6 121.7 H707.4 L707 124.8 L699.2 130.6 V141 L697.8 142.4 H692.2 L690.8 141 V130.6 L683 124.8 Z" fill="#b8dce4" stroke="#6f9ec6" stroke-width="1.7" stroke-linejoin="round"/>
 <path d="M685 123.6 H705" stroke="#f4fbff" stroke-width="1.3"/>
 <path d="M692.6 131 V140" stroke="#eaf6fa" stroke-width="1.3"/>
 <g fill="#b4d0d4" stroke="#8aa8ac" stroke-width="0.8"><circle cx="733.1" cy="124.1" r="3"/><circle cx="733.1" cy="132.5" r="3"/><circle cx="733.1" cy="140.8" r="3"/></g>
 <path d="M738.8 125.9 H750.5 A6.5 6.55 0 0 1 757 132.45" fill="none" stroke="#5f96d0" stroke-width="5.6"/>
 <path d="M757 132.2 A6.5 6.55 0 0 1 750.5 139 H738.8" fill="none" stroke="#e88080" stroke-width="5.6"/>
 <path d="M740.5 125.9 H750.5 A6.5 6.55 0 0 1 757 132.45" fill="none" stroke="#8a9cf0" stroke-width="1.8"/>
 <path d="M757 132.45 A6.5 6.55 0 0 1 750.5 139 H740.5" fill="none" stroke="#ffb4ac" stroke-width="1.8"/>
 <g stroke="#7094e0" stroke-width="2" fill="#7094e0">
  <path d="M795 122 V143 M784 132.5 H806" fill="none"/>
  <path d="M795 120 L791.5 124.5 H798.5 Z M795 145 L791.5 140.5 H798.5 Z M782 132.5 L786.5 129 V136 Z M808 132.5 L803.5 129 V136 Z" stroke="none"/>
 </g>
 <g fill="#7498e8"><rect x="832" y="119" width="4.2" height="2.4"/><rect x="832" y="144.7" width="4.2" height="2.4"/><rect x="838.1" y="119" width="3.8" height="2.4"/><rect x="838.1" y="144.7" width="3.8" height="2.4"/><rect x="843.8" y="119" width="3.8" height="2.4"/><rect x="843.8" y="144.7" width="3.8" height="2.4"/><rect x="849.5" y="119" width="3.8" height="2.4"/><rect x="849.5" y="144.7" width="3.8" height="2.4"/><rect x="855.2" y="119" width="4.2" height="2.4"/><rect x="855.2" y="144.7" width="4.2" height="2.4"/><rect x="832" y="119" width="2.4" height="4.2"/><rect x="857" y="119" width="2.4" height="4.2"/><rect x="832" y="125.1" width="2.4" height="3.8"/><rect x="857" y="125.1" width="2.4" height="3.8"/><rect x="832" y="130.8" width="2.4" height="3.8"/><rect x="857" y="130.8" width="2.4" height="3.8"/><rect x="832" y="136.5" width="2.4" height="3.8"/><rect x="857" y="136.5" width="2.4" height="3.8"/><rect x="832" y="142.2" width="2.4" height="4.9"/><rect x="857" y="142.2" width="2.4" height="4.9"/></g>
 <rect x="884.6" y="127.5" width="4.9" height="11" fill="#f4a4a4" stroke="#e47c7c" stroke-width="1.2"/>
 <rect x="886.3" y="129.3" width="1.6" height="7.5" fill="#ffc4c4"/>
 <rect x="892.6" y="121.5" width="7" height="17" fill="#bfe2f2" stroke="#7cc0e0" stroke-width="1.2"/>
 <rect x="894.5" y="123.3" width="3.3" height="13.4" fill="#dcf0f8"/>
 <rect x="902.5" y="127.5" width="4.9" height="11" fill="#f4a4a4" stroke="#e47c7c" stroke-width="1.2"/>
 <rect x="904.2" y="129.3" width="1.6" height="7.5" fill="#ffc4c4"/>
 <rect x="884" y="140.9" width="24.2" height="4.1" fill="#7ca4e8"/>
 <rect x="884" y="141.4" width="24.2" height="1.2" fill="#9cbcf0"/>
 <line x1="922.5" y1="117" x2="922.5" y2="149" stroke="#262626" stroke-width="1.2"/>
 <g stroke="#9ab8c8" stroke-width="1.9">
  <path d="M938.8 116.6 V121 M942.9 116.6 V121 M947 116.6 V121 M951.1 116.6 V121 M955.2 116.6 V121"/>
  <path d="M938.8 142.4 V146.8 M942.9 142.4 V146.8 M947 142.4 V146.8 M951.1 142.4 V146.8 M955.2 142.4 V146.8"/>
  <path d="M931.8 123.9 H936 M931.8 127.9 H936 M931.8 132 H936 M931.8 136 H936 M931.8 140 H936"/>
  <path d="M958 123.9 H962.2 M958 127.9 H962.2 M958 132 H962.2 M958 136 H962.2 M958 140 H962.2"/>
 </g>
 <rect x="936.5" y="121.4" width="21" height="20.6" fill="#c8d2da" stroke="#9ab8c8" stroke-width="1.8"/>
 <path d="M938.6 140 V123.4 H956" fill="none" stroke="#f0f4f6" stroke-width="1.4"/>
 <path d="M985 134.5 V122 H995" fill="none" stroke="#eaa818" stroke-width="2.3"/>
 <path d="M994 117 L1000.5 122 L994 127 Z" fill="#eaa818"/>
 <line x1="989.5" y1="141.5" x2="1004.5" y2="126.5" stroke="#6d90c4" stroke-width="3.4"/>
 <circle cx="987" cy="144" r="3.8" fill="#3e3e3e" stroke="#eaa818" stroke-width="2.2"/>
 <circle cx="1006.9" cy="124" r="3.8" fill="#3e3e3e" stroke="#eaa818" stroke-width="2.2"/>
 <path d="M1035.5 137 V128 A4.17 4.17 0 0 1 1043.8 128 V131 A4.17 4.17 0 0 0 1052.2 131 V128 A4.17 4.17 0 0 1 1060.5 128 V137" fill="none" stroke="#6a90c8" stroke-width="3.2"/>
 <circle cx="1035.5" cy="139.5" r="3.2" fill="#3e3e3e" stroke="#e8a418" stroke-width="2"/>
 <circle cx="1060.5" cy="139.5" r="3.2" fill="#3e3e3e" stroke="#e8a418" stroke-width="2"/>
 <rect x="1090.5" y="138" width="7.5" height="11" fill="#f0a040" stroke="#c07020" stroke-width="1"/>
 <rect x="1104" y="125.3" width="9.8" height="7" fill="#3aa82a" stroke="#1c7a10" stroke-width="1"/><rect x="1105" y="127.8" width="8" height="1.6" fill="#b8f0a0"/>
 <circle cx="1094.2" cy="128.5" r="11.2" fill="#f2c818" stroke="#c09a10" stroke-width="1.4"/>
 <circle cx="1094.2" cy="128.5" r="6.5" fill="none" stroke="#fae68a" stroke-width="1.4"/>
 <circle cx="1094.2" cy="128.5" r="3.3" fill="#333" stroke="#a08010" stroke-width="0.8"/>
 <path d="M1133 144.2 V129 H1145 V121.5 H1163.4 V144.2 Z" fill="#c4e0ea" stroke="#6a98c4" stroke-width="1.9"/>
 <path d="M1134.8 142.5 V130.8 H1146.8 V123.3 H1161.6" fill="none" stroke="#f6fcff" stroke-width="1.5"/>
 <rect x="1182.5" y="117.5" width="40" height="31" fill="none" stroke="#7a7a7a" stroke-width="1.8"/>
 <line x1="1191" y1="139" x2="1204" y2="127" stroke="#7a7a7a" stroke-width="1.6"/>
 <circle cx="1191" cy="139" r="3.2" fill="#3e3e3e" stroke="#7a7a7a" stroke-width="1.6"/>
 <circle cx="1205" cy="126" r="3.2" fill="#3e3e3e" stroke="#7a7a7a" stroke-width="1.6"/>
</svg>
<div id="msg" class="a">
  <div class="a" style="left:0;top:0;width:517px;height:10px;background:#fff"></div>
  <div class="a" style="left:0;top:10px;width:517px;height:35px;background:#4e4e4e"></div>
  <div class="a" style="left:5px;top:18px;font-size:17px;font-weight:bold;color:#e6e6e6;white-space:nowrap">Messages</div>
  <svg class="a" style="left:465px;top:18px" width="46" height="18" viewBox="465 203 46 18">
    <path d="M469 206 H483 L476 217.8 Z" fill="#fff"/>
    <path d="M494 206 L506 218 M506 206 L494 218" stroke="#fff" stroke-width="3.2"/>
  </svg>
  <div class="a" style="left:9px;top:57px;width:496px;height:208px;background:#3c3c3c;border:1px solid #262626"></div>
  <div class="a" style="left:10px;top:58px;width:494px;height:27px;background:#484848;border-bottom:1px solid #262626"></div>
  <div class="a" style="left:9px;top:271px;width:496px;height:105px;background:#3c3c3c;border:1px solid #262626"></div>
  <div class="a" style="left:13px;top:63px;font-size:15px;color:#e6e6e6">Class</div>
  <div class="a" style="left:73px;top:62px;width:1px;height:20px;background:#262626"></div>
  <div class="a" style="left:77px;top:63px;font-size:15px;color:#e6e6e6;white-space:nowrap">Docu...</div>
  <div class="a" style="left:141px;top:62px;width:1px;height:20px;background:#262626"></div>
  <div class="a" style="left:144px;top:63px;font-size:15px;color:#e6e6e6;white-space:nowrap">So...</div>
  <div class="a" style="left:181px;top:62px;width:1px;height:20px;background:#262626"></div>
  <div class="a" style="left:185px;top:63px;font-size:15px;color:#e6e6e6;white-space:nowrap">Message</div>
  <div class="a" style="left:342px;top:62px;width:1px;height:20px;background:#262626"></div>
  <div class="a" style="left:345px;top:63px;font-size:15px;color:#e6e6e6;white-space:nowrap">Ti...</div>
  <div class="a" style="left:382px;top:62px;width:1px;height:20px;background:#262626"></div>
  <div class="a" style="left:386px;top:63px;font-size:15px;color:#e6e6e6;white-space:nowrap">Da...</div>
  <div class="a" style="left:422px;top:62px;width:1px;height:20px;background:#262626"></div>
  <div class="a" style="left:425px;top:63px;font-size:15px;color:#e6e6e6;white-space:nowrap">No.</div>
</div>
</body></html>
